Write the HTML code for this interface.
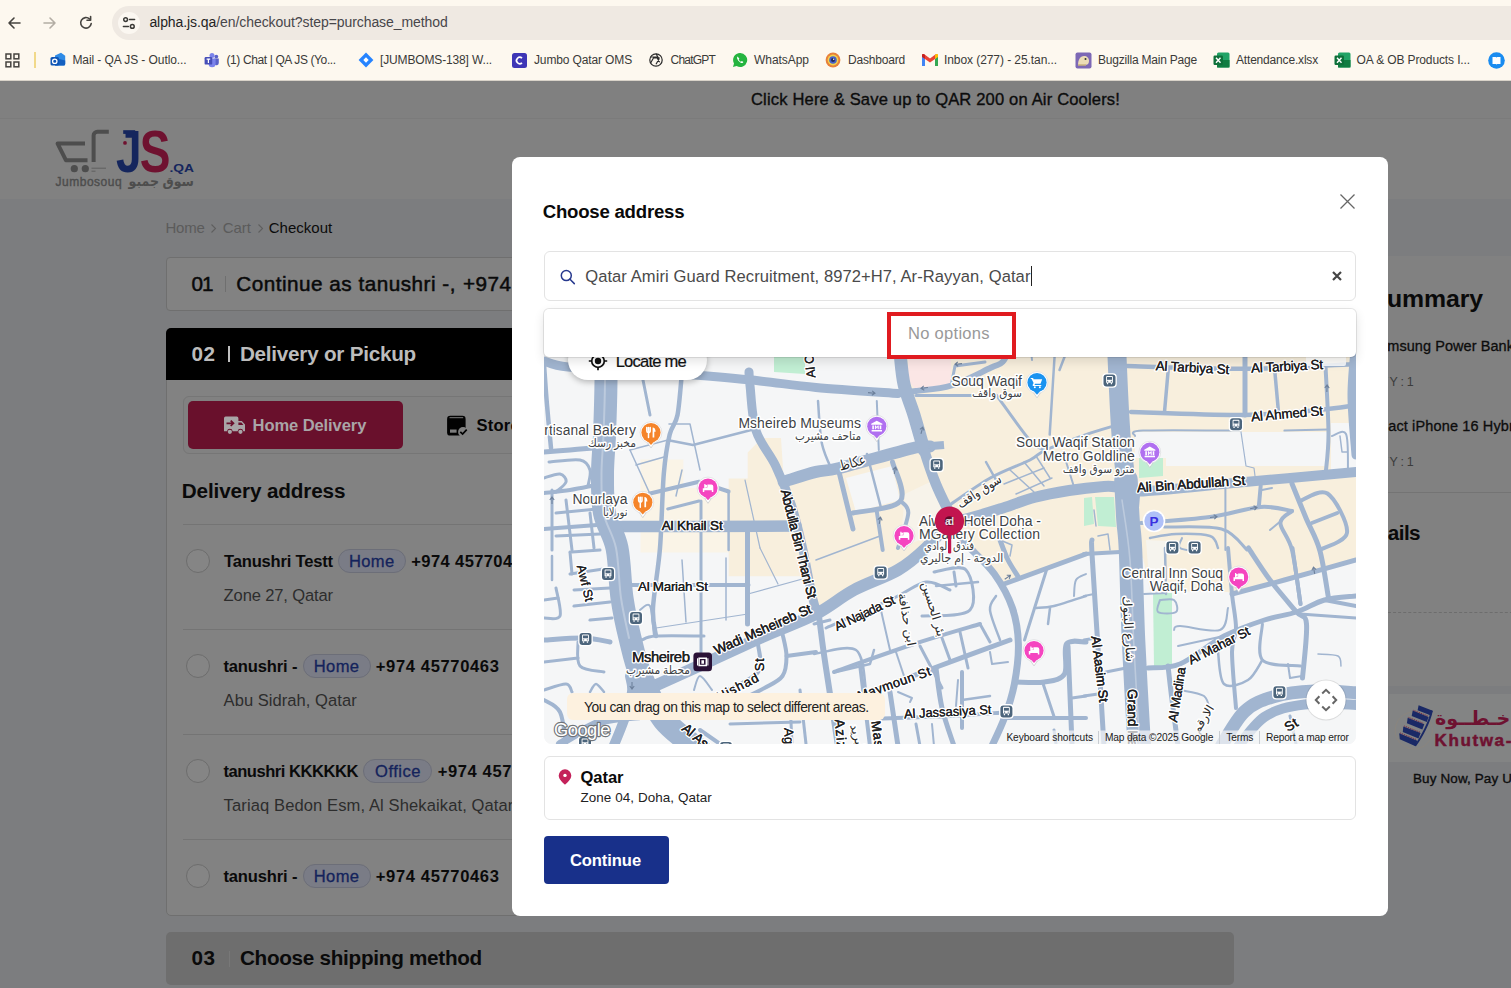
<!DOCTYPE html>
<html lang="en">
<head>
<meta charset="utf-8">
<title>Checkout - Choose address</title>
<style>
*{box-sizing:border-box;margin:0;padding:0}
html,body{width:1511px;height:988px;overflow:hidden;background:#7c7d7f;font-family:"Liberation Sans","DejaVu Sans",sans-serif;}
.abs{position:absolute}
.tx{position:absolute;white-space:nowrap;display:block}
#chrome{position:absolute;left:0;top:0;width:1511px;height:81px;background:#fdf8ef;border-bottom:1px solid #d9d3c9;z-index:20;overflow:hidden}
#omni{position:absolute;left:112px;top:6px;width:1420px;height:34px;border-radius:17px;background:#efe9e2}
#page{position:absolute;left:0;top:81px;width:1511px;height:907px;overflow:hidden;}
#page .in{position:absolute;left:0;top:-81px;width:1511px;height:988px}
.card{position:absolute;background:#828282;border:1px solid #6f6f6f;border-radius:4px}
.hr{position:absolute;height:1px;background:#747474;left:183px;width:1036px}
.radio{position:absolute;left:186px;width:24px;height:24px;border-radius:50%;border:1px solid #6d6d6d;background:#858585}
.badge{position:absolute;height:24px;border-radius:12px;border:1px solid #6c6e78;background:#7a7c86}
#modal{position:absolute;left:512px;top:157px;width:876px;height:759px;background:#fff;border-radius:8px;z-index:10;overflow:hidden}
#modal .in{position:absolute;left:-512px;top:-157px;width:1511px;height:988px}
</style>
</head>
<body>
<!-- ===================== BROWSER CHROME ===================== -->
<div id="chrome">
  <div id="omni"></div>
  <!-- back -->
  <svg class="abs" style="left:6px;top:15px" width="16" height="16" viewBox="0 0 16 16"><path d="M14 8H3M8 3L3 8l5 5" fill="none" stroke="#45433f" stroke-width="1.6" stroke-linecap="round" stroke-linejoin="round"/></svg>
  <!-- forward -->
  <svg class="abs" style="left:42px;top:15px" width="16" height="16" viewBox="0 0 16 16"><path d="M2 8h11M8 3l5 5-5 5" fill="none" stroke="#b3ada4" stroke-width="1.6" stroke-linecap="round" stroke-linejoin="round"/></svg>
  <!-- reload -->
  <svg class="abs" style="left:78px;top:15px" width="16" height="16" viewBox="0 0 16 16"><path d="M13.2 8.6A5.3 5.3 0 1 1 11.6 4" fill="none" stroke="#45433f" stroke-width="1.6" stroke-linecap="round"/><path d="M12.6 1.6v3.6H9" fill="none" stroke="#45433f" stroke-width="1.6" stroke-linecap="round" stroke-linejoin="round"/></svg>
  <!-- site info -->
  <div class="abs" style="left:118px;top:12px;width:22px;height:22px;border-radius:11px;background:#fbf7f1"></div>
  <svg class="abs" style="left:121px;top:15px" width="16" height="16" viewBox="0 0 16 16"><g fill="none" stroke="#3b3a37" stroke-width="1.5" stroke-linecap="round"><path d="M8.5 4.6H13.6M2.4 11.4H7.4"/><circle cx="4.6" cy="4.6" r="1.9"/><circle cx="11.3" cy="11.4" r="1.9"/></g></svg>
  <!-- apps grid -->
  <svg class="abs" style="left:5px;top:53px" width="15" height="15" viewBox="0 0 15 15"><g fill="none" stroke="#45433f" stroke-width="1.5"><rect x="1" y="1" width="4.8" height="4.8"/><rect x="9" y="1" width="4.8" height="4.8"/><rect x="1" y="9" width="4.8" height="4.8"/><rect x="9" y="9" width="4.8" height="4.8"/></g></svg>
  <div class="abs" style="left:34px;top:52px;width:1.5px;height:16px;background:#f1d98a"></div>
  <!-- bookmark favicons -->
  <svg class="abs" style="left:50px;top:52px" width="16" height="16" viewBox="0 0 16 16"><path d="M5 3.5L11 .8l4.2 3V12a1.6 1.6 0 0 1-1.6 1.6H5z" fill="#2f8be6"/><path d="M5 6l10.2 2.5V12a1.6 1.6 0 0 1-1.6 1.6H5z" fill="#1460c0"/><rect x=".5" y="5" width="8.5" height="8.5" rx="1.6" fill="#0f55b5"/><circle cx="4.75" cy="9.25" r="2.2" fill="none" stroke="#fff" stroke-width="1.3"/></svg>
  <svg class="abs" style="left:204px;top:52px" width="16" height="16" viewBox="0 0 16 16"><circle cx="12.3" cy="4.6" r="1.9" fill="#5a62c8"/><circle cx="8" cy="3.4" r="2.5" fill="#7b83eb"/><path d="M10.5 6.5h4.3v4.6a2.3 2.3 0 0 1-4.3 1z" fill="#5a62c8"/><path d="M4.6 6.5h7v5.2a3.5 3.5 0 0 1-7 0z" fill="#7b83eb"/><rect x=".6" y="5" width="7.6" height="7.6" rx="1.2" fill="#464eb8"/><path d="M2.6 7.2h3.6M4.4 7.2v3.9" stroke="#fff" stroke-width="1.2"/></svg>
  <svg class="abs" style="left:358px;top:52px" width="16" height="16" viewBox="0 0 16 16"><path d="M8 .6L15.4 8 8 15.4.6 8z" fill="#2684ff"/><path d="M8 5.3L10.7 8 8 10.7 5.3 8z" fill="#fff"/></svg>
  <svg class="abs" style="left:512px;top:53px" width="15" height="15" viewBox="0 0 15 15"><rect width="15" height="15" rx="2.5" fill="#3e36b6"/><path d="M10 5.2a3.2 3.2 0 1 0 0 4.6" fill="none" stroke="#fff" stroke-width="1.7"/></svg>
  <svg class="abs" style="left:648px;top:52px" width="16" height="16" viewBox="0 0 16 16"><g fill="none" stroke="#2b2b2b" stroke-width="1.2"><circle cx="8" cy="8" r="6.2"/><path d="M8 1.8l3 5.2-3 5.2M2.6 5l6 0 3 5.2M2.6 11l3-5.2 6 0"/></g></svg>
  <svg class="abs" style="left:732px;top:52px" width="16" height="16" viewBox="0 0 16 16"><path d="M8 1a7 7 0 0 0-6 10.5L1 15l3.6-1A7 7 0 1 0 8 1z" fill="#25b43f"/><path d="M5.6 4.6c-.6.6-.8 1.600 0 3 .9 1.600 2.300 2.900 3.800 3.400 1 .3 1.700-.3 2-.9l-1.600-1-.8.7c-.9-.4-1.900-1.400-2.300-2.300l.7-.8z" fill="#fff"/></svg>
  <svg class="abs" style="left:825px;top:52px" width="16" height="16" viewBox="0 0 16 16"><circle cx="8" cy="8" r="7.4" fill="#e8803a"/><circle cx="8" cy="8" r="5.4" fill="#f5d24a"/><circle cx="8" cy="8" r="3.8" fill="#4a63c9"/><circle cx="8" cy="8" r="2" fill="#232a5c"/><circle cx="8.700" cy="7.3" r=".7" fill="#fff"/></svg>
  <svg class="abs" style="left:922px;top:54px" width="16" height="12" viewBox="0 0 16 12"><path d="M0 1.200V12h3V5z" fill="#4285f4"/><path d="M16 1.200V12h-3V5z" fill="#34a853"/><path d="M0 1.200L3 5l5 3.600L13 5l3-3.800L13.700.2 8 4.600 2.300.2z" fill="#ea4335"/><path d="M13 5V1l1.300-.9A1.100 1.100 0 0 1 16 1.200V3z" fill="#fbbc04"/><path d="M3 5V1L1.700.1A1.100 1.100 0 0 0 0 1.200V3z" fill="#c5221f"/></svg>
  <svg class="abs" style="left:1075px;top:52px" width="17" height="17" viewBox="0 0 17 17"><rect x=".5" y=".5" width="16" height="16" rx="2" fill="#7d68b5"/><path d="M3 13c0-5 2-9 6-9 3 0 5 2 5 5s-2 4-4 4z" fill="#ecdcb6"/><circle cx="10.500" cy="7" r="1" fill="#333"/><path d="M3 13h8" stroke="#c9b37c" stroke-width="1.500"/></svg>
  <svg class="abs" style="left:1213px;top:52px" width="17" height="16" viewBox="0 0 17 16"><rect x="4" y=".5" width="12.500" height="15" rx="1.500" fill="#21a366"/><rect x="4" y="8" width="12.500" height="7.500" fill="#107c41"/><rect x=".5" y="3.500" width="9.500" height="9.500" rx="1.200" fill="#0e703a"/><path d="M3 5.800l4.500 5M7.500 5.800l-4.500 5" stroke="#fff" stroke-width="1.400"/></svg>
  <svg class="abs" style="left:1334px;top:52px" width="17" height="16" viewBox="0 0 17 16"><rect x="4" y=".5" width="12.500" height="15" rx="1.500" fill="#21a366"/><rect x="4" y="8" width="12.500" height="7.500" fill="#107c41"/><rect x=".5" y="3.500" width="9.500" height="9.500" rx="1.200" fill="#0e703a"/><path d="M3 5.800l4.500 5M7.500 5.800l-4.500 5" stroke="#fff" stroke-width="1.400"/></svg>
  <svg class="abs" style="left:1488px;top:52px" width="17" height="17" viewBox="0 0 17 17"><circle cx="8.500" cy="8.500" r="8.300" fill="#1a8cf0"/><path d="M4.500 5h3.200a1 1 0 0 1 .8.400 1 1 0 0 1 .8-.4h3.200v7H9.300l-.8.600-.8-.6H4.500z" fill="#fff"/></svg>
<span id="t0" class="tx" style="left:149.4px;top:12.3px;line-height:20px;font-size:14px;font-weight:400;color:#47464a;letter-spacing:-0.075px;"><span style="color:#1f1f1f">alpha.js.qa</span>/en/checkout?step=purchase_method</span>
<span id="t1" class="tx" style="left:72.4px;top:51.8px;line-height:17px;font-size:12px;font-weight:400;color:#3a3a38;letter-spacing:-0.080px;">Mail - QA JS - Outlo...</span>
<span id="t2" class="tx" style="left:226.4px;top:51.8px;line-height:17px;font-size:12px;font-weight:400;color:#3a3a38;letter-spacing:-0.377px;">(1) Chat | QA JS (Yo...</span>
<span id="t3" class="tx" style="left:380.0px;top:51.8px;line-height:17px;font-size:12px;font-weight:400;color:#3a3a38;letter-spacing:-0.149px;">[JUMBOMS-138] W...</span>
<span id="t4" class="tx" style="left:534.0px;top:51.8px;line-height:17px;font-size:12px;font-weight:400;color:#3a3a38;letter-spacing:-0.135px;">Jumbo Qatar OMS</span>
<span id="t5" class="tx" style="left:670.5px;top:51.8px;line-height:17px;font-size:12px;font-weight:400;color:#3a3a38;letter-spacing:-0.788px;">ChatGPT</span>
<span id="t6" class="tx" style="left:754.0px;top:51.8px;line-height:17px;font-size:12px;font-weight:400;color:#3a3a38;letter-spacing:-0.045px;">WhatsApp</span>
<span id="t7" class="tx" style="left:848.0px;top:51.8px;line-height:17px;font-size:12px;font-weight:400;color:#3a3a38;letter-spacing:-0.191px;">Dashboard</span>
<span id="t8" class="tx" style="left:944.0px;top:51.8px;line-height:17px;font-size:12px;font-weight:400;color:#3a3a38;letter-spacing:-0.075px;">Inbox (277) - 25.tan...</span>
<span id="t9" class="tx" style="left:1098.0px;top:51.8px;line-height:17px;font-size:12px;font-weight:400;color:#3a3a38;letter-spacing:-0.207px;">Bugzilla Main Page</span>
<span id="t10" class="tx" style="left:1236.0px;top:51.8px;line-height:17px;font-size:12px;font-weight:400;color:#3a3a38;letter-spacing:-0.181px;">Attendance.xlsx</span>
<span id="t11" class="tx" style="left:1356.5px;top:51.8px;line-height:17px;font-size:12px;font-weight:400;color:#3a3a38;letter-spacing:-0.121px;">OA &amp; OB Products I...</span>
</div>

<!-- ===================== DIMMED PAGE ===================== -->
<div id="page"><div class="in">
  <div class="abs" style="left:0;top:81px;width:1511px;height:37px;background:#808080"></div>
  <div class="abs" style="left:0;top:118px;width:1511px;height:81px;background:#818181;border-top:1px solid #7b7b7b"></div>
  <svg class="abs" style="left:50px;top:122px" width="150" height="72" viewBox="50 122 150 72">
    <g fill="none" stroke="#4d4d4d" stroke-width="4" stroke-linejoin="round">
      <path d="M85 143.600H57.600L66 160.300H87.500"/>
      <path d="M93.600 162V135.500a3.800 3.800 0 0 1 3.800-3.800H108.800"/>
    </g>
    <circle cx="74.300" cy="168.700" r="3.600" fill="#4d4d4d"/><circle cx="85.300" cy="168.700" r="3.600" fill="#4d4d4d"/>
    <path d="M91.500 168.200h14.500M91.500 171.200h4" stroke="#5a5a5a" stroke-width=".9"/>
    <circle cx="125" cy="142.900" r="1.900" fill="#6f1230"/>
    <rect x="123.200" y="130.200" width="12" height="3.700" fill="#15265d"/>
    <text x="0" y="0" transform="translate(116 172.300) scale(.78 1)" font-size="59" font-weight="700" fill="#15265d">J</text>
    <text x="0" y="0" transform="translate(139.800 172.300) scale(.78 1)" font-size="59" font-weight="700" fill="#6f1230">S</text>
    <text x="169.500" y="172.300" font-size="11.800" font-weight="700" fill="#15265d" textLength="24.500" lengthAdjust="spacingAndGlyphs">.QA</text>
    <text x="55.600" y="186.300" font-size="12" font-weight="400" fill="#4d4d4d" stroke="#4d4d4d" stroke-width=".4" textLength="66" lengthAdjust="spacing">Jumbosouq</text>
    <text x="194" y="186" font-size="13.500" font-weight="700" fill="#4d4d4d" text-anchor="end" textLength="65.500" lengthAdjust="spacingAndGlyphs">سوق جمبو</text>
  </svg>
  <!-- breadcrumb chevrons -->
  <svg class="abs" style="left:210px;top:223px" width="7" height="11" viewBox="0 0 7 11"><path d="M1.500 1.500l4 4-4 4" fill="none" stroke="#5f5f5f" stroke-width="1.100"/></svg>
  <svg class="abs" style="left:257px;top:223px" width="7" height="11" viewBox="0 0 7 11"><path d="M1.500 1.500l4 4-4 4" fill="none" stroke="#5f5f5f" stroke-width="1.100"/></svg>
  <!-- step 01 -->
  <div class="card" style="left:166px;top:257px;width:1068px;height:54px"></div>
  <div class="abs" style="left:224.500px;top:276px;width:1.500px;height:16px;background:#6f6f6f"></div>
  <!-- step 02 -->
  <div class="card" style="left:166px;top:328px;width:1068px;height:588px;border-radius:5px"></div>
  <div class="abs" style="left:166px;top:328px;width:1068px;height:52px;background:#000;border-radius:5px 5px 0 0"></div>
  <div class="abs" style="left:228px;top:346px;width:1.600px;height:16px;background:#c0c0c0"></div>
  <div class="abs" style="left:183px;top:396px;width:1036px;height:58px;border:1px solid #767676;border-radius:6px;background:#818181"></div>
  <div class="abs" style="left:188px;top:401px;width:215px;height:48px;border-radius:5px;background:#69102c"></div>
  <!-- truck -->
  <svg class="abs" style="left:222px;top:415px" width="26" height="22" viewBox="0 0 26 22"><g fill="#a9a5a7"><path d="M2 3.200a1.600 1.600 0 0 1 1.600-1.600H14.800a1.600 1.600 0 0 1 1.600 1.600V6h3.400l3.200 3.600v6.600h-1.700a2.900 2.900 0 0 0-5.700 0H10.700a2.900 2.900 0 0 0-5.700 0H2z"/><circle cx="7.850" cy="16.800" r="2.100"/><circle cx="18.450" cy="16.800" r="2.100"/></g><path d="M4.500 8.300h6.300M8.700 5.600l2.800 2.700-2.800 2.700" fill="none" stroke="#69102c" stroke-width="1.700"/><path d="M16.400 7.600h3l2 2.400h-5z" fill="#69102c"/></svg>
  <!-- store pickup -->
  <svg class="abs" style="left:446px;top:414px" width="24" height="24" viewBox="0 0 24 24"><rect x="1.100" y="1.800" width="18.500" height="19.800" rx="3.200" fill="#020202"/><path d="M3.500 3.700h13.700" stroke="#8a8a8a" stroke-width=".9"/><rect x="4" y="15.500" width="6.600" height="3.200" fill="#7d7d7d"/><circle cx="17" cy="18" r="4.900" fill="#808080"/><path d="M14.300 17.800l2.300 2.300 4.100-4.500" fill="none" stroke="#020202" stroke-width="1.700"/></svg>
  <div class="hr" style="top:524px"></div><div class="hr" style="top:629px"></div><div class="hr" style="top:734px"></div><div class="hr" style="top:839px"></div>
  <div class="radio" style="top:549px"></div><div class="radio" style="top:654px"></div><div class="radio" style="top:759px"></div><div class="radio" style="top:864px"></div>
  <div class="badge" style="left:338px;top:549px;width:68px"></div>
  <div class="badge" style="left:303px;top:654px;width:68px"></div>
  <div class="badge" style="left:363px;top:759px;width:69px"></div>
  <div class="badge" style="left:303px;top:864px;width:68px"></div>
  <!-- step 03 -->
  <div class="abs" style="left:166px;top:932px;width:1068px;height:53px;background:#6e6e6e;border-radius:5px"></div>
  <div class="abs" style="left:228.500px;top:951px;width:1.500px;height:16px;background:#787878"></div>
  <!-- right column: order summary -->
  <div class="abs" style="left:1380px;top:256px;width:140px;height:430px;background:#818181"></div>
  <div class="abs" style="left:1388px;top:492px;width:130px;height:1px;background:#747474"></div>
  <div class="abs" style="left:1388px;top:612px;width:130px;height:0;border-top:1px dashed #6d6d6d"></div>
  <div class="abs" style="left:1389px;top:694px;width:140px;height:68px;background:#838484"></div>
  <svg class="abs" style="left:1390px;top:700px" width="50" height="60" viewBox="1390 700 50 60">
    <circle cx="1413.800" cy="730.500" r="18.600" fill="none" stroke="#8b857c" stroke-width=".8"/>
    <g fill="#1a2966">
      <path d="M1418.600 705.300L1432.700 710.800 1431 715.600 1417.600 710.200z"/>
      <path d="M1412.700 710.600L1428.600 716.900 1426.800 722 1411.700 715.900z"/>
      <path d="M1407.700 717.700L1424.300 724.300 1422.300 729.500 1406.900 723.200z"/>
      <path d="M1403.300 726.400L1420.600 733.100 1418.500 738.400 1402.800 731.900z"/>
      <path d="M1399.200 733.300L1417.400 740.700 1415.600 746.200 1399.800 739.300z"/>
      <path d="M1431 710.200L1432.800 710.900C1430.200 722.400 1423.600 735.800 1416 746.300L1414.400 745.600C1421.800 735 1428.400 721.700 1431 710.200z"/>
    </g>
    <g stroke="#7b1c3a" stroke-width=".9" stroke-dasharray="1.100 .9" fill="none"><path d="M1413.500 710.300l14.500 5.700M1408.500 717.400l15 6M1404.200 726l15.800 6.200M1400.200 733l16.500 6.700"/></g>
  </svg>
<span id="t12" class="tx" style="left:751.0px;top:88.9px;line-height:22px;font-size:16.56px;font-weight:400;color:#0c0c0c;letter-spacing:0.162px;-webkit-text-stroke:0.35px #0c0c0c;">Click Here &amp; Save up to QAR 200 on Air Coolers!</span>
<span id="t13" class="tx" style="left:165.4px;top:218.1px;line-height:20px;font-size:15.0075px;font-weight:400;color:#5b5b5b;letter-spacing:-0.168px;">Home</span>
<span id="t14" class="tx" style="left:222.7px;top:218.1px;line-height:20px;font-size:15.0075px;font-weight:400;color:#5b5b5b;letter-spacing:-0.050px;">Cart</span>
<span id="t15" class="tx" style="left:268.7px;top:218.1px;line-height:20px;font-size:15.0075px;font-weight:400;color:#0b0b0b;letter-spacing:0.033px;">Checkout</span>
<span id="t16" class="tx" style="left:191.4px;top:269.7px;line-height:28px;font-size:20.7px;font-weight:400;color:#0a0a0a;letter-spacing:-0.808px;-webkit-text-stroke:0.5px #0a0a0a;">01</span>
<span id="t17" class="tx" style="left:236.2px;top:269.7px;line-height:28px;font-size:20.7px;font-weight:400;color:#0a0a0a;letter-spacing:0.507px;-webkit-text-stroke:0.5px #0a0a0a;">Continue as tanushri -,</span>
<span id="t18" class="tx" style="left:463.0px;top:269.7px;line-height:28px;font-size:20.7px;font-weight:400;color:#0a0a0a;letter-spacing:0.473px;-webkit-text-stroke:0.5px #0a0a0a;">+974</span><span class="tx" style="left:511.5px;top:269.7px;line-height:28px;font-size:20.7px;font-weight:400;color:#0a0a0a;-webkit-text-stroke:0.5px #0a0a0a;">&nbsp;45770463</span>
<span id="t19" class="tx" style="left:191.4px;top:339.7px;line-height:28px;font-size:20.7px;font-weight:700;color:#bcbcbc;letter-spacing:0.692px;">02</span>
<span id="t20" class="tx" style="left:239.9px;top:339.7px;line-height:28px;font-size:20.7px;font-weight:700;color:#bcbcbc;letter-spacing:-0.246px;">Delivery or Pickup</span>
<span id="t21" class="tx" style="left:191.4px;top:944.4px;line-height:28px;font-size:20.7px;font-weight:700;color:#0a0a0a;letter-spacing:0.692px;">03</span>
<span id="t22" class="tx" style="left:239.9px;top:944.4px;line-height:28px;font-size:20.7px;font-weight:700;color:#0a0a0a;letter-spacing:-0.280px;">Choose shipping method</span>
<span id="t23" class="tx" style="left:252.6px;top:415.2px;line-height:22px;font-size:16.56px;font-weight:700;color:#a9a5a7;letter-spacing:-0.102px;">Home Delivery</span>
<span id="t24" class="tx" style="left:476.4px;top:415.2px;line-height:22px;font-size:16.56px;font-weight:700;color:#050505;letter-spacing:0.261px;">Store</span><span class="tx" style="left:520.0px;top:415.2px;line-height:22px;font-size:16.56px;font-weight:700;color:#050505;">&nbsp;Pickup</span>
<span id="t25" class="tx" style="left:181.8px;top:476.7px;line-height:28px;font-size:20.7px;font-weight:700;color:#0a0a0a;letter-spacing:-0.126px;">Delivery address</span>
<span id="t26" class="tx" style="left:224.1px;top:550.9px;line-height:22px;font-size:16.56px;font-weight:700;color:#0a0a0a;letter-spacing:-0.203px;">Tanushri Testt</span>
<span id="t27" class="tx" style="left:348.9px;top:550.9px;line-height:22px;font-size:16.56px;font-weight:400;color:#14235c;letter-spacing:0.350px;-webkit-text-stroke:0.3px #14235c;">Home</span>
<span id="t28" class="tx" style="left:411.3px;top:550.9px;line-height:22px;font-size:16.56px;font-weight:700;color:#0a0a0a;letter-spacing:0.377px;">+974 457704</span><span class="tx" style="left:512.5px;top:550.9px;line-height:22px;font-size:16.56px;font-weight:700;color:#0a0a0a;">63</span>
<span id="t29" class="tx" style="left:223.6px;top:585.3px;line-height:22px;font-size:16.56px;font-weight:400;color:#2d2d2d;letter-spacing:-0.135px;">Zone 27, Qatar</span>
<span id="t30" class="tx" style="left:223.4px;top:656.1px;line-height:22px;font-size:16.56px;font-weight:700;color:#0a0a0a;letter-spacing:-0.149px;">tanushri -</span>
<span id="t31" class="tx" style="left:313.7px;top:656.1px;line-height:22px;font-size:16.56px;font-weight:400;color:#14235c;letter-spacing:0.400px;-webkit-text-stroke:0.3px #14235c;">Home</span>
<span id="t32" class="tx" style="left:375.8px;top:656.1px;line-height:22px;font-size:16.56px;font-weight:700;color:#0a0a0a;letter-spacing:0.634px;">+974 45770463</span>
<span id="t33" class="tx" style="left:223.6px;top:690.3px;line-height:22px;font-size:16.56px;font-weight:400;color:#2d2d2d;letter-spacing:0.038px;">Abu Sidrah, Qatar</span>
<span id="t34" class="tx" style="left:223.4px;top:760.9px;line-height:22px;font-size:16.56px;font-weight:700;color:#0a0a0a;letter-spacing:-0.465px;">tanushri KKKKKK</span>
<span id="t35" class="tx" style="left:375.0px;top:760.9px;line-height:22px;font-size:16.56px;font-weight:400;color:#14235c;letter-spacing:0.513px;-webkit-text-stroke:0.3px #14235c;">Office</span>
<span id="t36" class="tx" style="left:437.7px;top:760.9px;line-height:22px;font-size:16.56px;font-weight:700;color:#0a0a0a;letter-spacing:0.607px;">+974 457</span><span class="tx" style="left:512.0px;top:760.9px;line-height:22px;font-size:16.56px;font-weight:700;color:#0a0a0a;">70463</span>
<span id="t37" class="tx" style="left:223.6px;top:795.1px;line-height:22px;font-size:16.56px;font-weight:400;color:#2d2d2d;letter-spacing:0.104px;">Tariaq Bedon Esm, Al Shekaikat, Qatar</span>
<span id="t38" class="tx" style="left:223.4px;top:865.9px;line-height:22px;font-size:16.56px;font-weight:700;color:#0a0a0a;letter-spacing:-0.149px;">tanushri -</span>
<span id="t39" class="tx" style="left:313.7px;top:865.9px;line-height:22px;font-size:16.56px;font-weight:400;color:#14235c;letter-spacing:0.400px;-webkit-text-stroke:0.3px #14235c;">Home</span>
<span id="t40" class="tx" style="left:375.8px;top:865.9px;line-height:22px;font-size:16.56px;font-weight:700;color:#0a0a0a;letter-spacing:0.634px;">+974 45770463</span>
<span class="tx" style="right:125.3px;top:281.9px;line-height:34px;font-size:24.84px;font-weight:700;color:#0a0a0a;">Order S</span><span id="t41" class="tx" style="left:1387.0px;top:281.9px;line-height:34px;font-size:24.84px;font-weight:700;color:#0a0a0a;letter-spacing:-0.108px;">ummary</span>
<span class="tx" style="right:125.0px;top:335.9px;line-height:20px;font-size:14.49px;font-weight:400;color:#0d0d0d;-webkit-text-stroke:0.3px #0d0d0d;">Sa</span><span id="t42" class="tx" style="left:1387.3px;top:335.9px;line-height:20px;font-size:14.49px;font-weight:400;color:#0d0d0d;letter-spacing:0.070px;-webkit-text-stroke:0.3px #0d0d0d;">msung Power Bank</span>
<span class="tx" style="right:122.9px;top:374.4px;line-height:17px;font-size:12.42px;font-weight:400;color:#3c3c3c;">QT</span><span id="t43" class="tx" style="left:1389.4px;top:374.4px;line-height:17px;font-size:12.42px;font-weight:400;color:#3c3c3c;letter-spacing:-0.239px;">Y : 1</span>
<span class="tx" style="right:124.1px;top:415.9px;line-height:20px;font-size:14.49px;font-weight:400;color:#0d0d0d;-webkit-text-stroke:0.3px #0d0d0d;">Comp</span><span id="t44" class="tx" style="left:1388.2px;top:415.9px;line-height:20px;font-size:14.49px;font-weight:400;color:#0d0d0d;letter-spacing:0.144px;-webkit-text-stroke:0.3px #0d0d0d;">act iPhone 16 Hybr</span>
<span class="tx" style="right:122.9px;top:454.4px;line-height:17px;font-size:12.42px;font-weight:400;color:#3c3c3c;">QT</span><span id="t45" class="tx" style="left:1389.4px;top:454.4px;line-height:17px;font-size:12.42px;font-weight:400;color:#3c3c3c;letter-spacing:-0.239px;">Y : 1</span>
<span class="tx" style="right:124.5px;top:519.1px;line-height:28px;font-size:20.7px;font-weight:700;color:#0a0a0a;">Price Det</span><span id="t46" class="tx" style="left:1387.8px;top:519.1px;line-height:28px;font-size:20.7px;font-weight:700;color:#0a0a0a;letter-spacing:-0.579px;">ails</span>
<span id="t47" class="tx" style="left:1413.0px;top:769.5px;line-height:18px;font-size:13.455px;font-weight:400;color:#0d0d0d;letter-spacing:0.139px;-webkit-text-stroke:0.35px #0d0d0d;">Buy Now, Pay U</span>
<span id="t48" class="tx" style="left:1434.5px;top:728.7px;line-height:23px;font-size:17.0775px;font-weight:700;color:#6e1231;letter-spacing:1.597px;-webkit-text-stroke:0.5px #6e1231;">Khutwa-</span>
<span id="t49" class="tx" style="left:1435.0px;top:706.4px;line-height:26px;font-size:19.1475px;font-weight:700;color:#6e1231;direction:rtl;">خـطــوة</span>
</div></div>

<!-- ===================== MODAL ===================== -->
<div id="modal"><div class="in">
  <!-- close -->
  <svg class="abs" style="left:1339px;top:193px" width="17" height="17" viewBox="0 0 17 17"><path d="M1.500 1.500l14 14M15.500 1.500l-14 14" stroke="#666" stroke-width="1.300" fill="none"/></svg>
  <!-- search input -->
  <div class="abs" style="left:544px;top:251px;width:812px;height:50px;border:1px solid #e3e3e3;border-radius:6px;background:#fff"></div>
  <svg class="abs" style="left:559px;top:268px" width="18" height="18" viewBox="0 0 18 18"><circle cx="7.300" cy="7.600" r="5" fill="none" stroke="#27398e" stroke-width="1.500"/><path d="M11 11.300l4.300 4.300" stroke="#27398e" stroke-width="1.500" stroke-linecap="round"/></svg>
  <div class="abs" style="left:1031px;top:266px;width:1px;height:20px;background:#222"></div>
  <svg class="abs" style="left:1331px;top:270px" width="12" height="12" viewBox="0 0 12 12"><path d="M2 2l8 8M10 2l-8 8" stroke="#444" stroke-width="2.200" fill="none"/></svg>
  <!-- map -->
  <div class="abs" style="left:544px;top:320px;width:812px;height:424px;border-radius:0 0 8px 8px;overflow:hidden;background:#f5f6f7">
<svg width="812" height="424" viewBox="544 320 812 424" style="position:absolute;left:0;top:0;font-family:'Liberation Sans','DejaVu Sans',sans-serif">
<rect x="544" y="320" width="812" height="424" fill="#f5f6f7"/>
<polygon points="908,320 1356,320 1356,560 1284,580 1232,594 1228,592 1150,591 1143,558 1120,553 1086,554 1004,584 990,566 968,546 949,521 936,484 924,450 914,415 904,385" fill="#f8efdd"/>
<polygon points="949,521 926,548 898,570 854,590 816,612 806,560 792,505 784,483 816,473 840,469 912,449 936,447" fill="#f8efdd"/>
<polygon points="640.5,459.6 683.4,459.6 683.4,488 728.7,488 728.7,552.5 640.5,552.5" fill="#faf4e7"/>
<polygon points="728.7,478.6 747.7,478.6 747.7,452.4 762,438 781,438 783.5,476 790.6,490.5 797.8,533.4 809.7,576.3 728.7,576.3" fill="#f8efdd"/>
<polygon points="1135,432 1327,432 1327,466 1166,466 1166,458 1135,458" fill="#f5f6f7"/>
<polygon points="1331,423 1356,423 1356,470 1331,474" fill="#f5f6f7"/>
<polygon points="846,478 892,466 900,500 856,512" fill="#f5f6f7"/>
<polygon points="905,494 930,482 944,512 920,540 900,548" fill="#f7f3ea"/>
<polygon points="1146,540 1166,541 1166,592 1150,592" fill="#f6f4ee"/>
<polygon points="909,320 951,320 951,384 916,390 908,380" fill="#fbe6e5"/>
<polygon points="774,340 805,340 805,374 774,372" fill="#c1eed3"/>
<polygon points="1139,458 1163,458 1163,476 1139,478" fill="#c1eed3"/>
<polygon points="1084,498 1092,497 1094,524 1084,526" fill="#c1eed3"/>
<polygon points="1095,497 1114,497 1116,527 1098,526" fill="#c1eed3"/>
<polygon points="1153,593 1172,593 1172,666 1154,666" fill="#c1eed3"/>
<path d="M544 452 C548.3 451.7 561.8 450.7 570 450 C578.2 449.3 589.2 448.3 593 448" fill="none" stroke="#a1b5d0" stroke-width="5" stroke-linecap="round" stroke-linejoin="round"/>
<path d="M544 493 C548.3 492.5 562.2 491.2 570 490 C577.8 488.8 587.5 486.7 591 486" fill="none" stroke="#a1b5d0" stroke-width="4" stroke-linecap="round" stroke-linejoin="round"/>
<path d="M556 513 L597 509" fill="none" stroke="#a1b5d0" stroke-width="3" stroke-linecap="round" stroke-linejoin="round"/>
<path d="M552 490 L552 550" fill="none" stroke="#a1b5d0" stroke-width="3" stroke-linecap="round" stroke-linejoin="round"/>
<path d="M566 500 L572 550" fill="none" stroke="#a1b5d0" stroke-width="3" stroke-linecap="round" stroke-linejoin="round"/>
<path d="M544 364 C544.5 370.8 545.8 391.0 547 405 C548.2 419.0 550.3 440.8 551 448" fill="none" stroke="#a1b5d0" stroke-width="4.5" stroke-linecap="round" stroke-linejoin="round"/>
<path d="M549 462 C554.2 461.7 573.2 458.7 580 460 C586.8 461.3 588.7 465.7 590 470 C591.3 474.3 588.3 483.3 588 486" fill="none" stroke="#a1b5d0" stroke-width="3" stroke-linecap="round" stroke-linejoin="round"/>
<path d="M544 478 C546.7 477.3 556.3 473.3 560 474 C563.7 474.7 566.7 479.0 566 482 C565.3 485.0 557.7 490.3 556 492" fill="none" stroke="#a1b5d0" stroke-width="3" stroke-linecap="round" stroke-linejoin="round"/>
<path d="M544 529 L597 525" fill="none" stroke="#a1b5d0" stroke-width="4" stroke-linecap="round" stroke-linejoin="round"/>
<path d="M556 536 L600 534" fill="none" stroke="#a1b5d0" stroke-width="3" stroke-linecap="round" stroke-linejoin="round"/>
<path d="M590 513 L594 548" fill="none" stroke="#a1b5d0" stroke-width="3" stroke-linecap="round" stroke-linejoin="round"/>
<path d="M544 640 C550.7 639.7 573.0 637.7 584 638 C595.0 638.3 605.7 641.3 610 642" fill="none" stroke="#a1b5d0" stroke-width="5" stroke-linecap="round" stroke-linejoin="round"/>
<path d="M570 574 L610 568" fill="none" stroke="#a1b5d0" stroke-width="3" stroke-linecap="round" stroke-linejoin="round"/>
<path d="M574 590 L610 588" fill="none" stroke="#a1b5d0" stroke-width="3" stroke-linecap="round" stroke-linejoin="round"/>
<path d="M574 606 L610 602" fill="none" stroke="#a1b5d0" stroke-width="3" stroke-linecap="round" stroke-linejoin="round"/>
<path d="M590 620 L612 618" fill="none" stroke="#a1b5d0" stroke-width="3" stroke-linecap="round" stroke-linejoin="round"/>
<path d="M570 552 L572 574" fill="none" stroke="#a1b5d0" stroke-width="3" stroke-linecap="round" stroke-linejoin="round"/>
<path d="M572 552 L600 550" fill="none" stroke="#a1b5d0" stroke-width="3" stroke-linecap="round" stroke-linejoin="round"/>
<path d="M544 618 C546.7 617.7 558.0 621.0 560 616 C562.0 611.0 556.7 592.7 556 588" fill="none" stroke="#a1b5d0" stroke-width="3" stroke-linecap="round" stroke-linejoin="round"/>
<path d="M544 600 L558 598" fill="none" stroke="#a1b5d0" stroke-width="3" stroke-linecap="round" stroke-linejoin="round"/>
<path d="M544 662 L578 658" fill="none" stroke="#a1b5d0" stroke-width="3" stroke-linecap="round" stroke-linejoin="round"/>
<path d="M578 642 C578.3 646.0 575.7 661.0 580 666 C584.3 671.0 600.0 671.0 604 672" fill="none" stroke="#a1b5d0" stroke-width="3" stroke-linecap="round" stroke-linejoin="round"/>
<path d="M544 690 C547.7 689.0 561.3 683.7 566 684 C570.7 684.3 571.0 690.7 572 692" fill="none" stroke="#a1b5d0" stroke-width="3" stroke-linecap="round" stroke-linejoin="round"/>
<path d="M590 692 C591.0 690.7 593.7 684.0 596 684 C598.3 684.0 602.7 690.7 604 692" fill="none" stroke="#a1b5d0" stroke-width="2.5" stroke-linecap="round" stroke-linejoin="round"/>
<path d="M552 556 L552 580" fill="none" stroke="#a1b5d0" stroke-width="2.5" stroke-linecap="round" stroke-linejoin="round"/>
<path d="M544 700 C546.7 702.0 556.3 704.7 560 712 C563.7 719.3 565.0 738.7 566 744" fill="none" stroke="#a1b5d0" stroke-width="4" stroke-linecap="round" stroke-linejoin="round"/>
<path d="M682 372 C681.2 379.2 679.5 404.6 677.5 415 C675.5 425.4 672.0 424.8 669.7 434.6 C667.4 444.4 665.4 454.9 663.8 473.8 C662.2 492.7 661.8 525.6 660 548 C658.2 570.4 653.7 593.3 653 608 C652.3 622.7 655.5 631.3 656 636" fill="none" stroke="#a1b5d0" stroke-width="4.5" stroke-linecap="round" stroke-linejoin="round"/>
<path d="M642 375 L650 415" fill="none" stroke="#a1b5d0" stroke-width="3" stroke-linecap="round" stroke-linejoin="round"/>
<path d="M669.7 440.5 L693 445 L756 428.7" fill="none" stroke="#a1b5d0" stroke-width="2.5" stroke-linecap="round" stroke-linejoin="round"/>
<path d="M669 424 L690 424 L700 470" fill="none" stroke="#a1b5d0" stroke-width="1.5" stroke-linecap="round" stroke-linejoin="round"/>
<path d="M630 450 L668 440" fill="none" stroke="#a1b5d0" stroke-width="1.5" stroke-linecap="round" stroke-linejoin="round"/>
<path d="M630 450 L650 494" fill="none" stroke="#a1b5d0" stroke-width="1.5" stroke-linecap="round" stroke-linejoin="round"/>
<path d="M636 465 L664 457" fill="none" stroke="#a1b5d0" stroke-width="1.5" stroke-linecap="round" stroke-linejoin="round"/>
<path d="M650 493.5 L699 481.7 L728.6 491.5" fill="none" stroke="#a1b5d0" stroke-width="4" stroke-linecap="round" stroke-linejoin="round"/>
<path d="M667.7 509 L699 501" fill="none" stroke="#a1b5d0" stroke-width="3" stroke-linecap="round" stroke-linejoin="round"/>
<path d="M701 501 L701 652" fill="none" stroke="#a1b5d0" stroke-width="3" stroke-linecap="round" stroke-linejoin="round"/>
<path d="M728.6 491.5 L728.6 550" fill="none" stroke="#a1b5d0" stroke-width="2.5" stroke-linecap="round" stroke-linejoin="round"/>
<path d="M682 470 L676 496" fill="none" stroke="#a1b5d0" stroke-width="1.5" stroke-linecap="round" stroke-linejoin="round"/>
<path d="M745 480 L760 548" fill="none" stroke="#a1b5d0" stroke-width="1.2" stroke-linecap="round" stroke-linejoin="round"/>
<path d="M760 548 L778 584" fill="none" stroke="#a1b5d0" stroke-width="1.2" stroke-linecap="round" stroke-linejoin="round"/>
<path d="M747.5 530 L747.5 624" fill="none" stroke="#a1b5d0" stroke-width="5" stroke-linecap="round" stroke-linejoin="round"/>
<path d="M632 585 L748.5 585" fill="none" stroke="#a1b5d0" stroke-width="4" stroke-linecap="round" stroke-linejoin="round"/>
<path d="M642 640 C644.3 639.3 645.7 636.7 656 636 C666.3 635.3 696.0 636.0 704 636" fill="none" stroke="#a1b5d0" stroke-width="3" stroke-linecap="round" stroke-linejoin="round"/>
<path d="M726 558 L726 620" fill="none" stroke="#a1b5d0" stroke-width="1.5" stroke-linecap="round" stroke-linejoin="round"/>
<path d="M682 560 L686 622" fill="none" stroke="#a1b5d0" stroke-width="1.5" stroke-linecap="round" stroke-linejoin="round"/>
<path d="M656 628 L748 614" fill="none" stroke="#a1b5d0" stroke-width="1.2" stroke-linecap="round" stroke-linejoin="round"/>
<path d="M748 594 L806 578" fill="none" stroke="#a1b5d0" stroke-width="1.2" stroke-linecap="round" stroke-linejoin="round"/>
<path d="M640 610 C641.7 609.3 647.7 601.7 650 606 C652.3 610.3 653.3 631.0 654 636" fill="none" stroke="#a1b5d0" stroke-width="2" stroke-linecap="round" stroke-linejoin="round"/>
<path d="M724 692 C729.7 688.7 752.3 680.0 758 672 C763.7 664.0 758.0 648.7 758 644" fill="none" stroke="#a1b5d0" stroke-width="4" stroke-linecap="round" stroke-linejoin="round"/>
<path d="M782.5 634 C783.2 637.7 786.5 649.0 786.5 656 C786.5 663.0 786.2 670.7 782.5 676 C778.8 681.3 771.6 684.0 764.5 688 C757.4 692.0 744.1 698.0 740 700" fill="none" stroke="#a1b5d0" stroke-width="4" stroke-linecap="round" stroke-linejoin="round"/>
<path d="M786.5 656 L816 652" fill="none" stroke="#a1b5d0" stroke-width="4" stroke-linecap="round" stroke-linejoin="round"/>
<path d="M694 690 C695.0 687.7 697.0 676.0 700 676 C703.0 676.0 710.0 687.7 712 690" fill="none" stroke="#a1b5d0" stroke-width="2" stroke-linecap="round" stroke-linejoin="round"/>
<path d="M700 730 L720 744" fill="none" stroke="#a1b5d0" stroke-width="4" stroke-linecap="round" stroke-linejoin="round"/>
<path d="M730 724 L800 722" fill="none" stroke="#a1b5d0" stroke-width="3" stroke-linecap="round" stroke-linejoin="round"/>
<path d="M790 700 L792 744" fill="none" stroke="#a1b5d0" stroke-width="3" stroke-linecap="round" stroke-linejoin="round"/>
<path d="M800 690 L806 744" fill="none" stroke="#a1b5d0" stroke-width="3" stroke-linecap="round" stroke-linejoin="round"/>
<path d="M839.5 473.8 L853 529" fill="none" stroke="#a1b5d0" stroke-width="5" stroke-linecap="round" stroke-linejoin="round"/>
<path d="M892.5 462 C893.8 468.5 907.0 492.5 900.4 501 C893.8 509.5 860.9 511.0 853 513" fill="none" stroke="#a1b5d0" stroke-width="5" stroke-linecap="round" stroke-linejoin="round"/>
<path d="M876.8 511.5 L882.7 550" fill="none" stroke="#a1b5d0" stroke-width="4" stroke-linecap="round" stroke-linejoin="round"/>
<path d="M818 401 C818.7 408.2 819.4 431.9 822 444 C824.6 456.1 831.7 468.8 833.6 473.8" fill="none" stroke="#a1b5d0" stroke-width="2.5" stroke-linecap="round" stroke-linejoin="round"/>
<path d="M876.8 401 L878.8 450" fill="none" stroke="#a1b5d0" stroke-width="2" stroke-linecap="round" stroke-linejoin="round"/>
<path d="M867 454 L880.8 507" fill="none" stroke="#a1b5d0" stroke-width="2.5" stroke-linecap="round" stroke-linejoin="round"/>
<path d="M900.4 501 C901.7 503.0 908.7 505.2 908.3 513 C907.9 520.8 899.7 542.2 898 548" fill="none" stroke="#a1b5d0" stroke-width="4" stroke-linecap="round" stroke-linejoin="round"/>
<path d="M816 560 L880 536" fill="none" stroke="#a1b5d0" stroke-width="1.5" stroke-linecap="round" stroke-linejoin="round"/>
<path d="M908 392 C909.3 391.8 908.8 392.1 916 391 C923.2 389.9 939.0 389.4 951.5 385.5 C964.0 381.6 982.2 371.7 990.7 367.8 C999.2 363.9 999.3 365.3 1002.5 362 C1005.7 358.7 1008.8 350.3 1010 348" fill="none" stroke="#a1b5d0" stroke-width="6" stroke-linecap="round" stroke-linejoin="round"/>
<path d="M916 395.5 L971 395.5" fill="none" stroke="#a1b5d0" stroke-width="3" stroke-linecap="round" stroke-linejoin="round"/>
<path d="M951 386 L955 366 L985 362" fill="none" stroke="#a1b5d0" stroke-width="3" stroke-linecap="round" stroke-linejoin="round"/>
<path d="M949.5 505 C956.4 500.5 977.3 485.3 990.7 477.8 C1004.1 470.3 1020.8 464.6 1030 460 C1039.2 455.4 1036.4 454.2 1045.7 450 C1055.0 445.8 1074.1 438.8 1086 434.6 C1097.9 430.4 1111.8 426.6 1117 425" fill="none" stroke="#a1b5d0" stroke-width="3" stroke-linecap="round" stroke-linejoin="round"/>
<path d="M996.6 395.3 C1002.2 402.8 1021.8 431.3 1030 440.4 C1038.2 449.5 1043.1 448.4 1045.7 450" fill="none" stroke="#a1b5d0" stroke-width="3" stroke-linecap="round" stroke-linejoin="round"/>
<path d="M1055.6 340 L1049.7 434.6" fill="none" stroke="#a1b5d0" stroke-width="2.5" stroke-linecap="round" stroke-linejoin="round"/>
<path d="M1071 340 L1059.5 370" fill="none" stroke="#a1b5d0" stroke-width="2.5" stroke-linecap="round" stroke-linejoin="round"/>
<path d="M1030 340 L1032 360" fill="none" stroke="#a1b5d0" stroke-width="2" stroke-linecap="round" stroke-linejoin="round"/>
<path d="M986 462 L996 480" fill="none" stroke="#a1b5d0" stroke-width="2.5" stroke-linecap="round" stroke-linejoin="round"/>
<path d="M1010 470 L1034 492" fill="none" stroke="#a1b5d0" stroke-width="1.5" stroke-linecap="round" stroke-linejoin="round"/>
<path d="M1024 462 L1044 486" fill="none" stroke="#a1b5d0" stroke-width="1.5" stroke-linecap="round" stroke-linejoin="round"/>
<path d="M1036 456 L1050 478" fill="none" stroke="#a1b5d0" stroke-width="1.5" stroke-linecap="round" stroke-linejoin="round"/>
<path d="M1004 484 L1044 468" fill="none" stroke="#a1b5d0" stroke-width="1.5" stroke-linecap="round" stroke-linejoin="round"/>
<path d="M1016 494 L1052 478" fill="none" stroke="#a1b5d0" stroke-width="1.5" stroke-linecap="round" stroke-linejoin="round"/>
<path d="M1063 452 L1075 490" fill="none" stroke="#a1b5d0" stroke-width="2" stroke-linecap="round" stroke-linejoin="round"/>
<path d="M1127 366 C1146.7 366.5 1206.8 369.1 1245 368.8 C1283.2 368.5 1337.5 364.8 1356 364" fill="none" stroke="#a1b5d0" stroke-width="4.5" stroke-linecap="round" stroke-linejoin="round"/>
<path d="M1131 412 C1150.0 412.5 1212.2 415.5 1245 415 C1277.8 414.5 1309.0 410.7 1327.5 409 C1346.0 407.3 1351.2 405.7 1356 405" fill="none" stroke="#a1b5d0" stroke-width="4.5" stroke-linecap="round" stroke-linejoin="round"/>
<path d="M1135 436 C1136.3 435.1 1125.3 431.5 1143 430.6 C1160.7 429.7 1224.7 430.6 1241 430.6" fill="none" stroke="#a1b5d0" stroke-width="2" stroke-linecap="round" stroke-linejoin="round"/>
<path d="M1168.4 367.8 L1164.5 412" fill="none" stroke="#a1b5d0" stroke-width="3.5" stroke-linecap="round" stroke-linejoin="round"/>
<path d="M1245 340 L1245 415" fill="none" stroke="#a1b5d0" stroke-width="5" stroke-linecap="round" stroke-linejoin="round"/>
<path d="M1274.5 367.8 L1278.4 411" fill="none" stroke="#a1b5d0" stroke-width="3.5" stroke-linecap="round" stroke-linejoin="round"/>
<path d="M1325.6 367.8 C1326.1 378.9 1328.5 416.9 1328.5 434.6 C1328.5 452.3 1326.1 467.4 1325.6 474" fill="none" stroke="#a1b5d0" stroke-width="4" stroke-linecap="round" stroke-linejoin="round"/>
<path d="M1356 340 C1355.3 349.2 1352.0 375.8 1352 395 C1352.0 414.2 1355.3 445.0 1356 455" fill="none" stroke="#a1b5d0" stroke-width="9" stroke-linecap="round" stroke-linejoin="round"/>
<path d="M1284.4 430.6 L1327.5 429.4" fill="none" stroke="#a1b5d0" stroke-width="2" stroke-linecap="round" stroke-linejoin="round"/>
<path d="M1241 432 L1246 466 L1254 468 L1255 476" fill="none" stroke="#a1b5d0" stroke-width="1.2" stroke-linecap="round" stroke-linejoin="round"/>
<path d="M1332 436 C1334.3 435.7 1343.3 428.3 1346 434 C1348.7 439.7 1347.7 464.0 1348 470" fill="none" stroke="#a1b5d0" stroke-width="2" stroke-linecap="round" stroke-linejoin="round"/>
<path d="M1340 436 L1342 452 L1347 452" fill="none" stroke="#a1b5d0" stroke-width="1.5" stroke-linecap="round" stroke-linejoin="round"/>
<path d="M1141 523 C1152.5 522.0 1189.8 519.7 1209.7 517 C1229.7 514.3 1247.0 508.0 1260.7 507 C1274.4 506.0 1286.8 510.3 1292 511" fill="none" stroke="#a1b5d0" stroke-width="4" stroke-linecap="round" stroke-linejoin="round"/>
<path d="M1260.7 485.6 L1258.8 507" fill="none" stroke="#a1b5d0" stroke-width="4" stroke-linecap="round" stroke-linejoin="round"/>
<path d="M1292 483.7 C1294.3 489.4 1301.4 506.9 1306 518 C1310.6 529.0 1316.0 536.7 1319.7 550 C1323.5 563.3 1327.0 590.0 1328.5 598" fill="none" stroke="#a1b5d0" stroke-width="5" stroke-linecap="round" stroke-linejoin="round"/>
<path d="M1300 501 C1304.6 499.8 1319.7 488.2 1327.5 493.5 C1335.3 498.8 1348.3 523.3 1347 532.7 C1345.7 542.1 1324.2 547.1 1319.7 550" fill="none" stroke="#a1b5d0" stroke-width="4" stroke-linecap="round" stroke-linejoin="round"/>
<path d="M1311.8 523 L1337.3 513" fill="none" stroke="#a1b5d0" stroke-width="4" stroke-linecap="round" stroke-linejoin="round"/>
<path d="M1292 511 C1290.1 513.0 1280.4 516.5 1280.4 523 C1280.4 529.5 1288.7 536.5 1292 550 C1295.3 563.5 1299.1 595.0 1300.5 604" fill="none" stroke="#a1b5d0" stroke-width="4" stroke-linecap="round" stroke-linejoin="round"/>
<path d="M1225.4 483.7 L1225.4 550" fill="none" stroke="#a1b5d0" stroke-width="2" stroke-linecap="round" stroke-linejoin="round"/>
<path d="M1164.5 527 C1174.0 527.3 1207.8 525.2 1221.5 529 C1235.2 532.8 1242.8 546.5 1247 550" fill="none" stroke="#a1b5d0" stroke-width="3" stroke-linecap="round" stroke-linejoin="round"/>
<path d="M1150 538 C1154.3 537.3 1166.0 534.3 1176 534 C1186.0 533.7 1203.0 533.7 1210 536 C1217.0 538.3 1216.7 546.0 1218 548" fill="none" stroke="#a1b5d0" stroke-width="2.5" stroke-linecap="round" stroke-linejoin="round"/>
<path d="M1182 538 C1181.7 539.7 1177.0 545.7 1180 548 C1183.0 550.3 1196.7 551.3 1200 552" fill="none" stroke="#a1b5d0" stroke-width="2" stroke-linecap="round" stroke-linejoin="round"/>
<path d="M1139 496 L1137 520" fill="none" stroke="#a1b5d0" stroke-width="2" stroke-linecap="round" stroke-linejoin="round"/>
<path d="M1262 490 L1272 488" fill="none" stroke="#a1b5d0" stroke-width="2" stroke-linecap="round" stroke-linejoin="round"/>
<path d="M1270 530 L1282 520" fill="none" stroke="#a1b5d0" stroke-width="2" stroke-linecap="round" stroke-linejoin="round"/>
<path d="M1094 510 L1096 526" fill="none" stroke="#a1b5d0" stroke-width="1.5" stroke-linecap="round" stroke-linejoin="round"/>
<path d="M1098 536 L1108 534 L1110 550" fill="none" stroke="#a1b5d0" stroke-width="1.5" stroke-linecap="round" stroke-linejoin="round"/>
<path d="M1000 540 C1001.3 543.3 1005.0 554.0 1008 560 C1011.0 566.0 1016.1 573.3 1017.7 576" fill="none" stroke="#a1b5d0" stroke-width="5" stroke-linecap="round" stroke-linejoin="round"/>
<path d="M1000 540 L1012 545 L1010 556" fill="none" stroke="#a1b5d0" stroke-width="1.5" stroke-linecap="round" stroke-linejoin="round"/>
<path d="M826 628 C837.3 623.0 877.3 605.7 894 598 C910.7 590.3 916.7 583.3 926 582 C935.3 580.7 946.0 588.7 950 590" fill="none" stroke="#a1b5d0" stroke-width="3" stroke-linecap="round" stroke-linejoin="round"/>
<path d="M834 672 C847.3 667.3 889.7 652.0 914 644 C938.3 636.0 969.0 627.3 980 624" fill="none" stroke="#a1b5d0" stroke-width="4" stroke-linecap="round" stroke-linejoin="round"/>
<path d="M870 692 C880.7 688.0 910.7 676.7 934 668 C957.3 659.3 997.3 644.7 1010 640" fill="none" stroke="#a1b5d0" stroke-width="5" stroke-linecap="round" stroke-linejoin="round"/>
<path d="M882 718.4 C893.3 718.0 929.7 717.0 950 716 C970.3 715.0 995.0 713.0 1004 712.4" fill="none" stroke="#a1b5d0" stroke-width="4" stroke-linecap="round" stroke-linejoin="round"/>
<path d="M1004 718 L1086 718" fill="none" stroke="#a1b5d0" stroke-width="4" stroke-linecap="round" stroke-linejoin="round"/>
<path d="M936 668 C937.0 674.7 939.0 695.0 942 708 C945.0 721.0 952.0 739.7 954 746" fill="none" stroke="#a1b5d0" stroke-width="5" stroke-linecap="round" stroke-linejoin="round"/>
<path d="M962 672 L962 728" fill="none" stroke="#a1b5d0" stroke-width="4" stroke-linecap="round" stroke-linejoin="round"/>
<path d="M890 692 L898 746" fill="none" stroke="#a1b5d0" stroke-width="5" stroke-linecap="round" stroke-linejoin="round"/>
<path d="M860 664 L870 746" fill="none" stroke="#a1b5d0" stroke-width="4" stroke-linecap="round" stroke-linejoin="round"/>
<path d="M1004 584 L1086 554" fill="none" stroke="#a1b5d0" stroke-width="5" stroke-linecap="round" stroke-linejoin="round"/>
<path d="M1046.5 570 L1024.5 640" fill="none" stroke="#a1b5d0" stroke-width="3" stroke-linecap="round" stroke-linejoin="round"/>
<path d="M1016 682 C1020.8 682.0 1036.4 683.3 1044.5 682 C1052.6 680.7 1060.8 680.3 1064.5 674 C1068.2 667.7 1062.9 649.3 1066.5 644 C1070.1 638.7 1082.8 642.3 1086 642" fill="none" stroke="#a1b5d0" stroke-width="5" stroke-linecap="round" stroke-linejoin="round"/>
<path d="M1068 646 L1072 744" fill="none" stroke="#a1b5d0" stroke-width="5" stroke-linecap="round" stroke-linejoin="round"/>
<path d="M1042.5 682 L1054.5 718" fill="none" stroke="#a1b5d0" stroke-width="3" stroke-linecap="round" stroke-linejoin="round"/>
<path d="M1036 608 C1039.0 607.7 1045.7 608.0 1054 606 C1062.3 604.0 1080.7 597.7 1086 596" fill="none" stroke="#a1b5d0" stroke-width="2.5" stroke-linecap="round" stroke-linejoin="round"/>
<path d="M1050 608 L1048 624" fill="none" stroke="#a1b5d0" stroke-width="2.5" stroke-linecap="round" stroke-linejoin="round"/>
<path d="M1086 574 C1084.3 575.0 1078.0 576.3 1076 580 C1074.0 583.7 1074.3 593.3 1074 596" fill="none" stroke="#a1b5d0" stroke-width="2" stroke-linecap="round" stroke-linejoin="round"/>
<path d="M1072 698 L1086 696" fill="none" stroke="#a1b5d0" stroke-width="3" stroke-linecap="round" stroke-linejoin="round"/>
<path d="M1054 730 L1056 744" fill="none" stroke="#a1b5d0" stroke-width="3" stroke-linecap="round" stroke-linejoin="round"/>
<path d="M934 572 C939.3 571.7 960.0 563.7 966 570 C972.0 576.3 977.3 602.3 970 610 C962.7 617.7 930.0 615.0 922 616" fill="none" stroke="#a1b5d0" stroke-width="3" stroke-linecap="round" stroke-linejoin="round"/>
<path d="M954 572 L956 586" fill="none" stroke="#a1b5d0" stroke-width="3" stroke-linecap="round" stroke-linejoin="round"/>
<path d="M936 586 L978 582" fill="none" stroke="#a1b5d0" stroke-width="2.5" stroke-linecap="round" stroke-linejoin="round"/>
<path d="M920 646 L942 688" fill="none" stroke="#a1b5d0" stroke-width="3" stroke-linecap="round" stroke-linejoin="round"/>
<path d="M942 638 L950 660" fill="none" stroke="#a1b5d0" stroke-width="3" stroke-linecap="round" stroke-linejoin="round"/>
<path d="M960 632 L968 668" fill="none" stroke="#a1b5d0" stroke-width="3" stroke-linecap="round" stroke-linejoin="round"/>
<path d="M980 624 L990 642" fill="none" stroke="#a1b5d0" stroke-width="3" stroke-linecap="round" stroke-linejoin="round"/>
<path d="M896 652 L904 676" fill="none" stroke="#a1b5d0" stroke-width="2" stroke-linecap="round" stroke-linejoin="round"/>
<path d="M880 606 L890 650" fill="none" stroke="#a1b5d0" stroke-width="2" stroke-linecap="round" stroke-linejoin="round"/>
<path d="M814 654 C821.0 653.3 847.3 644.0 856 650 C864.7 656.0 864.3 683.3 866 690" fill="none" stroke="#a1b5d0" stroke-width="2.5" stroke-linecap="round" stroke-linejoin="round"/>
<path d="M836 672 L870 664 L874 650" fill="none" stroke="#a1b5d0" stroke-width="2.5" stroke-linecap="round" stroke-linejoin="round"/>
<path d="M814 624 L830 620" fill="none" stroke="#a1b5d0" stroke-width="3" stroke-linecap="round" stroke-linejoin="round"/>
<path d="M996 596 C995.0 598.3 989.3 602.7 990 610 C990.7 617.3 998.3 635.0 1000 640" fill="none" stroke="#a1b5d0" stroke-width="2.5" stroke-linecap="round" stroke-linejoin="round"/>
<path d="M990 652 L992 664 L1008 662" fill="none" stroke="#a1b5d0" stroke-width="2" stroke-linecap="round" stroke-linejoin="round"/>
<path d="M958 680 L956 706" fill="none" stroke="#a1b5d0" stroke-width="2" stroke-linecap="round" stroke-linejoin="round"/>
<path d="M898 692 L912 698 L910 702" fill="none" stroke="#a1b5d0" stroke-width="2" stroke-linecap="round" stroke-linejoin="round"/>
<path d="M962 700 L990 696" fill="none" stroke="#a1b5d0" stroke-width="2.5" stroke-linecap="round" stroke-linejoin="round"/>
<path d="M916 724 L920 746" fill="none" stroke="#a1b5d0" stroke-width="3" stroke-linecap="round" stroke-linejoin="round"/>
<path d="M932 724 L934 746" fill="none" stroke="#a1b5d0" stroke-width="2" stroke-linecap="round" stroke-linejoin="round"/>
<path d="M1092 540 C1092.0 542.3 1091.0 536.0 1092 554 C1093.0 572.0 1096.0 616.0 1098 648 C1100.0 680.0 1103.0 729.7 1104 746" fill="none" stroke="#a1b5d0" stroke-width="5" stroke-linecap="round" stroke-linejoin="round"/>
<path d="M1084 554 L1120 552" fill="none" stroke="#a1b5d0" stroke-width="4" stroke-linecap="round" stroke-linejoin="round"/>
<path d="M1084 640 L1096 638" fill="none" stroke="#a1b5d0" stroke-width="3" stroke-linecap="round" stroke-linejoin="round"/>
<path d="M1084 696 L1098 694" fill="none" stroke="#a1b5d0" stroke-width="3" stroke-linecap="round" stroke-linejoin="round"/>
<path d="M1106 672 L1126 668" fill="none" stroke="#a1b5d0" stroke-width="3" stroke-linecap="round" stroke-linejoin="round"/>
<path d="M1084 596 L1094 594" fill="none" stroke="#a1b5d0" stroke-width="2" stroke-linecap="round" stroke-linejoin="round"/>
<path d="M1168 666 C1168.7 671.7 1170.3 686.7 1172 700 C1173.7 713.3 1177.0 738.3 1178 746" fill="none" stroke="#a1b5d0" stroke-width="5" stroke-linecap="round" stroke-linejoin="round"/>
<path d="M1165 548 L1166 594" fill="none" stroke="#a1b5d0" stroke-width="2.5" stroke-linecap="round" stroke-linejoin="round"/>
<path d="M1148 668 C1153.3 667.3 1167.3 669.3 1180 664 C1192.7 658.7 1209.9 643.3 1224 636 C1238.1 628.7 1252.3 624.0 1264.4 620 C1276.5 616.0 1286.5 615.3 1296.5 612 C1306.5 608.7 1314.6 602.7 1324.5 600 C1334.4 597.3 1350.8 596.7 1356 596" fill="none" stroke="#a1b5d0" stroke-width="5" stroke-linecap="round" stroke-linejoin="round"/>
<path d="M1228 548 C1228.7 555.7 1230.7 580.7 1232 594 C1233.3 607.3 1236.0 618.3 1236 628 C1236.0 637.7 1232.0 638.7 1232 652 C1232.0 665.3 1235.3 698.7 1236 708" fill="none" stroke="#a1b5d0" stroke-width="4" stroke-linecap="round" stroke-linejoin="round"/>
<path d="M1232 594 C1240.7 591.7 1263.7 585.7 1284.4 580 C1305.1 574.3 1344.1 563.3 1356 560" fill="none" stroke="#a1b5d0" stroke-width="5" stroke-linecap="round" stroke-linejoin="round"/>
<path d="M1248.4 548 C1252.0 553.3 1262.0 569.3 1270 580 C1278.0 590.7 1290.4 604.7 1296.5 612 C1302.6 619.3 1305.5 613.0 1306.5 624 C1307.5 635.0 1303.2 669.0 1302.5 678" fill="none" stroke="#a1b5d0" stroke-width="5" stroke-linecap="round" stroke-linejoin="round"/>
<path d="M1292.5 548 L1300.5 604" fill="none" stroke="#a1b5d0" stroke-width="4" stroke-linecap="round" stroke-linejoin="round"/>
<path d="M1324.5 600 L1356 606" fill="none" stroke="#a1b5d0" stroke-width="4" stroke-linecap="round" stroke-linejoin="round"/>
<path d="M1300 614 L1356 618" fill="none" stroke="#a1b5d0" stroke-width="3" stroke-linecap="round" stroke-linejoin="round"/>
<path d="M1262.4 624 C1262.4 630.0 1256.1 653.0 1262.4 660 C1268.8 667.0 1294.2 665.0 1300.5 666" fill="none" stroke="#a1b5d0" stroke-width="3" stroke-linecap="round" stroke-linejoin="round"/>
<path d="M1262.4 660 C1260.0 663.3 1254.4 676.0 1248 680 C1241.6 684.0 1229.0 688.7 1224 684 C1219.0 679.3 1219.0 657.3 1218 652" fill="none" stroke="#a1b5d0" stroke-width="2.5" stroke-linecap="round" stroke-linejoin="round"/>
<path d="M1174 630 C1175.0 629.3 1172.3 626.0 1180 626 C1187.7 626.0 1212.0 633.0 1220 630 C1228.0 627.0 1226.7 611.7 1228 608" fill="none" stroke="#a1b5d0" stroke-width="2" stroke-linecap="round" stroke-linejoin="round"/>
<path d="M1178 646 L1224 636" fill="none" stroke="#a1b5d0" stroke-width="2" stroke-linecap="round" stroke-linejoin="round"/>
<path d="M1144 594 L1166 593" fill="none" stroke="#a1b5d0" stroke-width="2" stroke-linecap="round" stroke-linejoin="round"/>
<path d="M1160 600 C1159.7 602.0 1155.3 610.0 1158 612 C1160.7 614.0 1173.3 614.0 1176 612 C1178.7 610.0 1176.7 602.0 1174 600 C1171.3 598.0 1162.3 600.0 1160 600" fill="none" stroke="#a1b5d0" stroke-width="2" stroke-linecap="round" stroke-linejoin="round"/>
<path d="M1288 664 L1290 678 L1302 676" fill="none" stroke="#a1b5d0" stroke-width="2" stroke-linecap="round" stroke-linejoin="round"/>
<path d="M1318 654 C1321.3 654.3 1334.2 654.0 1338 656 C1341.8 658.0 1340.5 664.3 1341 666" fill="none" stroke="#a1b5d0" stroke-width="1.5" stroke-linecap="round" stroke-linejoin="round"/>
<path d="M1180 690 C1184.0 691.0 1199.0 692.3 1204 696 C1209.0 699.7 1209.0 709.3 1210 712" fill="none" stroke="#a1b5d0" stroke-width="2" stroke-linecap="round" stroke-linejoin="round"/>
<path d="M1290 716 L1296 744" fill="none" stroke="#a1b5d0" stroke-width="3" stroke-linecap="round" stroke-linejoin="round"/>
<path d="M544 361 C548.0 362.0 552.0 365.3 568 367 C584.0 368.7 617.8 369.6 640 371 C662.2 372.4 681.0 373.9 701 375.6 C721.0 377.3 740.8 379.0 760 381 C779.2 383.0 793.0 385.3 816 387.4 C839.0 389.5 884.3 392.5 898 393.5" fill="none" stroke="#a1b5d0" stroke-width="9" stroke-linecap="round" stroke-linejoin="round"/>
<path d="M609 526.5 L700 526.5 L796 526" fill="none" stroke="#a1b5d0" stroke-width="11.5" stroke-linecap="round" stroke-linejoin="round"/>
<path d="M749 372 C749.2 374.2 748.8 375.7 750 385.5 C751.2 395.3 751.7 417.2 756 430.6 C760.3 444.0 769.8 453.6 775.7 466 C781.6 478.4 786.9 491.3 791.4 505 C795.9 518.7 799.1 532.5 802.6 548 C806.1 563.5 810.0 587.0 812.6 598 C815.2 609.0 817.1 611.3 818 614" fill="none" stroke="#a1b5d0" stroke-width="9" stroke-linecap="round" stroke-linejoin="round"/>
<path d="M818 608 C818.7 613.3 820.7 630.0 822 640 C823.3 650.0 823.3 650.3 826 668 C828.7 685.7 836.0 733.0 838 746" fill="none" stroke="#a1b5d0" stroke-width="6" stroke-linecap="round" stroke-linejoin="round"/>
<path d="M783.6 481.7 C789.0 480.1 806.7 474.2 816 471.9 C825.3 469.6 823.5 471.9 839.5 468 C855.5 464.1 896.9 451.9 912 448.3 C927.1 444.7 927.0 446.8 930 446.5" fill="none" stroke="#a1b5d0" stroke-width="12" stroke-linecap="round" stroke-linejoin="round"/>
<path d="M925 446.5 L944 445" fill="none" stroke="#a1b5d0" stroke-width="8" stroke-linecap="butt" stroke-linejoin="round"/>
<path d="M650 688 C660.3 683.3 692.9 668.7 712 660 C731.1 651.3 747.2 643.7 764.5 636 C781.8 628.3 801.1 621.7 816 614 C830.9 606.3 840.3 597.3 854 590 C867.7 582.7 886.0 577.0 898 570 C910.0 563.0 917.4 556.2 926 548 C934.6 539.8 945.6 525.5 949.5 521" fill="none" stroke="#a1b5d0" stroke-width="12" stroke-linecap="round" stroke-linejoin="round"/>
<path d="M949.5 523 C953.8 521.9 966.5 518.9 975 516.5 C983.5 514.1 990.5 512.0 1000.5 508.8 C1010.5 505.6 1023.6 500.4 1035 497.3 C1046.4 494.2 1057.5 492.3 1069 490.5 C1080.5 488.7 1096.0 487.1 1104 486.5 C1112.0 485.9 1114.8 486.9 1117 487" fill="none" stroke="#a1b5d0" stroke-width="11" stroke-linecap="round" stroke-linejoin="round"/>
<path d="M1117 487.5 C1120.7 488.2 1117.7 492.4 1139 491.5 C1160.3 490.6 1208.8 485.2 1245 482 C1281.2 478.8 1337.5 473.7 1356 472" fill="none" stroke="#a1b5d0" stroke-width="10" stroke-linecap="round" stroke-linejoin="round"/>
<path d="M899 330 C899.2 334.3 899.5 346.8 900.4 356 C901.3 365.2 902.0 375.7 904.3 385.5 C906.6 395.3 910.7 404.2 914 415 C917.3 425.8 922.3 444.2 924 450" fill="none" stroke="#a1b5d0" stroke-width="13" stroke-linecap="round" stroke-linejoin="round"/>
<path d="M914 415 C915.7 420.8 920.4 438.6 924 450 C927.6 461.4 931.5 473.2 935.8 483.7 C940.0 494.2 947.2 508.1 949.5 513" fill="none" stroke="#a1b5d0" stroke-width="10.5" stroke-linecap="round" stroke-linejoin="round"/>
<path d="M949.5 513 C950.9 516.7 954.6 529.2 958 535 C961.4 540.8 963.9 541.5 970 548 C976.1 554.5 987.3 564.0 994.4 574 C1001.5 584.0 1008.4 596.3 1012.4 608 C1016.4 619.7 1018.1 631.3 1018.4 644 C1018.7 656.7 1016.7 671.7 1014.4 684 C1012.1 696.3 1008.5 707.0 1004.4 718 C1000.3 729.0 992.4 744.7 990 750" fill="none" stroke="#a1b5d0" stroke-width="7" stroke-linecap="round" stroke-linejoin="round"/>
<path d="M1117 330 C1117.0 334.3 1116.3 338.6 1117 356 C1117.7 373.4 1119.5 413.9 1121 434.6 C1122.5 455.3 1125.2 472.4 1126 480" fill="none" stroke="#a1b5d0" stroke-width="19" stroke-linecap="round" stroke-linejoin="round"/>
<path d="M1126 480 C1126.3 486.7 1127.2 508.3 1128 520 C1128.8 531.7 1129.6 530.0 1130.5 550 C1131.4 570.0 1132.0 606.7 1133.5 640 C1135.0 673.3 1138.5 731.7 1139.5 750" fill="none" stroke="#a1b5d0" stroke-width="23.5" stroke-linecap="round" stroke-linejoin="round"/>
<path d="M1122 500 C1123.3 510.0 1128.0 535.3 1130 560 C1132.0 584.7 1132.3 616.3 1134 648 C1135.7 679.7 1139.0 733.0 1140 750" fill="none" stroke="#bccadd" stroke-width="1.6" stroke-linecap="round" stroke-linejoin="round"/>
<path d="M606 330 C606.0 338.5 606.2 363.5 606 381 C605.8 398.5 605.1 419.5 604.5 435 C603.9 450.5 602.5 461.0 602.5 474 C602.5 487.0 602.1 500.7 604.5 513 C606.9 525.3 614.1 533.8 617 548 C619.9 562.2 619.8 583.0 622 598 C624.2 613.0 626.8 625.0 630 638 C633.2 651.0 635.3 662.3 641 676 C646.7 689.7 653.8 707.3 664 720 C674.2 732.7 695.7 746.7 702 752" fill="none" stroke="#a1b5d0" stroke-width="23" stroke-linecap="round" stroke-linejoin="round"/>
<path d="M605 330 C605.0 338.5 605.2 363.5 605 381 C604.8 398.5 604.1 419.5 603.5 435 C602.9 450.5 601.5 461.0 601.5 474 C601.5 487.0 601.1 500.7 603.5 513 C605.9 525.3 613.1 533.8 616 548 C618.9 562.2 618.8 583.0 621 598 C623.2 613.0 627.7 631.3 629 638" fill="none" stroke="#bccadd" stroke-width="2" stroke-linecap="round" stroke-linejoin="round"/>
<path d="M630 676 C630.3 678.7 633.0 684.7 632 692 C631.0 699.3 627.3 710.3 624 720 C620.7 729.7 614.0 745.0 612 750" fill="none" stroke="#a1b5d0" stroke-width="10" stroke-linecap="round" stroke-linejoin="round"/>
<path d="M560 744 C566.7 740.3 586.7 726.7 600 722 C613.3 717.3 633.3 717.0 640 716" fill="none" stroke="#a1b5d0" stroke-width="8" stroke-linecap="round" stroke-linejoin="round"/>
<path d="M1218 752 C1222.3 745.3 1234.6 721.2 1244 712 C1253.4 702.8 1262.7 700.0 1274.4 696.5 C1286.2 693.0 1300.2 691.6 1314.5 691 C1328.8 690.4 1352.4 692.7 1360 693" fill="none" stroke="#a1b5d0" stroke-width="13" stroke-linecap="round" stroke-linejoin="round"/>
<path d="M1234 752 C1239.1 746.2 1252.7 724.9 1264.4 717 C1276.2 709.1 1288.6 706.5 1304.5 704.5 C1320.4 702.5 1350.8 704.9 1360 705" fill="none" stroke="#a1b5d0" stroke-width="10" stroke-linecap="round" stroke-linejoin="round"/>
<rect x="1306" y="340" width="40" height="26" rx="2" fill="#fff" fill-opacity=".85"/>
<text x="692.2" y="530.46" font-size="13.5" font-weight="400" fill="#202022" text-anchor="middle" textLength="61" lengthAdjust="spacing" style="paint-order:stroke;stroke:#fff;stroke-width:3px;stroke-linejoin:round" >Al Khail St</text>
<text x="692.2" y="530.46" font-size="13.5" font-weight="400" fill="#202022" text-anchor="middle" textLength="61" lengthAdjust="spacing" stroke="#202022" stroke-width="0.38" >Al Khail St</text>
<text x="799.05" y="548.61" font-size="13.5" font-weight="400" fill="#202022" text-anchor="middle" textLength="111.833" lengthAdjust="spacing" transform="rotate(75.9762 799.05 543.75)" style="paint-order:stroke;stroke:#fff;stroke-width:3px;stroke-linejoin:round" >Abdulla Bin Thani St</text>
<text x="799.05" y="548.61" font-size="13.5" font-weight="400" fill="#202022" text-anchor="middle" textLength="111.833" lengthAdjust="spacing" transform="rotate(75.9762 799.05 543.75)" stroke="#202022" stroke-width="0.38" >Abdulla Bin Thani St</text>
<text x="852.3" y="467.54" font-size="14" font-weight="400" fill="#2a2a2a" text-anchor="middle" textLength="27" lengthAdjust="spacingAndGlyphs" transform="rotate(-15 852.3 462.5)" style="paint-order:stroke;stroke:#fff;stroke-width:3px;stroke-linejoin:round" >عكاظ</text>
<text x="979" y="495.68" font-size="13" font-weight="400" fill="#2a2a2a" text-anchor="middle" textLength="50" lengthAdjust="spacingAndGlyphs" transform="rotate(-33 979 491)" style="paint-order:stroke;stroke:#fff;stroke-width:3px;stroke-linejoin:round" >سوق واقف</text>
<text x="1192.5" y="372.26" font-size="13.5" font-weight="400" fill="#202022" text-anchor="middle" textLength="73.6" lengthAdjust="spacing" transform="rotate(3 1192.5 367.4)" style="paint-order:stroke;stroke:#fff;stroke-width:3px;stroke-linejoin:round" >Al Tarbiya St</text>
<text x="1192.5" y="372.26" font-size="13.5" font-weight="400" fill="#202022" text-anchor="middle" textLength="73.6" lengthAdjust="spacing" transform="rotate(3 1192.5 367.4)" stroke="#202022" stroke-width="0.15" >Al Tarbiya St</text>
<text x="1287" y="370.86" font-size="13.5" font-weight="400" fill="#202022" text-anchor="middle" textLength="72" lengthAdjust="spacing" transform="rotate(-3 1287 366)" style="paint-order:stroke;stroke:#fff;stroke-width:3px;stroke-linejoin:round" >Al Tarbiya St</text>
<text x="1287" y="370.86" font-size="13.5" font-weight="400" fill="#202022" text-anchor="middle" textLength="72" lengthAdjust="spacing" transform="rotate(-3 1287 366)" stroke="#202022" stroke-width="0.15" >Al Tarbiya St</text>
<text x="1287" y="418.36" font-size="13.5" font-weight="400" fill="#202022" text-anchor="middle" textLength="72" lengthAdjust="spacing" transform="rotate(-5 1287 413.5)" style="paint-order:stroke;stroke:#fff;stroke-width:3px;stroke-linejoin:round" >Al Ahmed St</text>
<text x="1287" y="418.36" font-size="13.5" font-weight="400" fill="#202022" text-anchor="middle" textLength="72" lengthAdjust="spacing" transform="rotate(-5 1287 413.5)" stroke="#202022" stroke-width="0.15" >Al Ahmed St</text>
<text x="1191" y="488.56" font-size="13.5" font-weight="400" fill="#202022" text-anchor="middle" textLength="108.5" lengthAdjust="spacing" transform="rotate(-4 1191 483.7)" style="paint-order:stroke;stroke:#fff;stroke-width:3px;stroke-linejoin:round" >Ali Bin Abdullah St</text>
<text x="1191" y="488.56" font-size="13.5" font-weight="400" fill="#202022" text-anchor="middle" textLength="108.5" lengthAdjust="spacing" transform="rotate(-4 1191 483.7)" stroke="#202022" stroke-width="0.38" >Ali Bin Abdullah St</text>
<text x="673" y="590.56" font-size="13.5" font-weight="400" fill="#202022" text-anchor="middle" textLength="70" lengthAdjust="spacing" style="paint-order:stroke;stroke:#fff;stroke-width:3px;stroke-linejoin:round" >Al Mariah St</text>
<text x="673" y="590.56" font-size="13.5" font-weight="400" fill="#202022" text-anchor="middle" textLength="70" lengthAdjust="spacing" stroke="#202022" stroke-width="0.15" >Al Mariah St</text>
<text x="585.5" y="587.5" font-size="12.5" font-weight="400" fill="#202022" text-anchor="middle" textLength="37.108" lengthAdjust="spacing" transform="rotate(75.9638 585.5 583)" style="paint-order:stroke;stroke:#fff;stroke-width:3px;stroke-linejoin:round" >Awf St</text>
<text x="585.5" y="587.5" font-size="12.5" font-weight="400" fill="#202022" text-anchor="middle" textLength="37.108" lengthAdjust="spacing" transform="rotate(75.9638 585.5 583)" stroke="#202022" stroke-width="0.15" >Awf St</text>
<text x="762.55" y="634.11" font-size="13.5" font-weight="400" fill="#202022" text-anchor="middle" textLength="105.078" lengthAdjust="spacing" transform="rotate(-23.8573 762.55 629.25)" style="paint-order:stroke;stroke:#fff;stroke-width:3px;stroke-linejoin:round" >Wadi Msheireb St</text>
<text x="762.55" y="634.11" font-size="13.5" font-weight="400" fill="#202022" text-anchor="middle" textLength="105.078" lengthAdjust="spacing" transform="rotate(-23.8573 762.55 629.25)" stroke="#202022" stroke-width="0.38" >Wadi Msheireb St</text>
<text x="737.25" y="691.68" font-size="13" font-weight="400" fill="#202022" text-anchor="middle" textLength="45.6207" lengthAdjust="spacing" transform="rotate(-27.4076 737.25 687)" style="paint-order:stroke;stroke:#fff;stroke-width:3px;stroke-linejoin:round" >Nishad</text>
<text x="737.25" y="691.68" font-size="13" font-weight="400" fill="#202022" text-anchor="middle" textLength="45.6207" lengthAdjust="spacing" transform="rotate(-27.4076 737.25 687)" stroke="#202022" stroke-width="0.2" >Nishad</text>
<text x="759.6" y="669.48" font-size="13" font-weight="400" fill="#202022" text-anchor="middle" textLength="13" lengthAdjust="spacing" transform="rotate(-90 759.6 664.8)" style="paint-order:stroke;stroke:#fff;stroke-width:3px;stroke-linejoin:round" >St</text>
<text x="759.6" y="669.48" font-size="13" font-weight="400" fill="#202022" text-anchor="middle" textLength="13" lengthAdjust="spacing" transform="rotate(-90 759.6 664.8)" stroke="#202022" stroke-width="0.2" >St</text>
<text x="864.5" y="617.68" font-size="13" font-weight="400" fill="#202022" text-anchor="middle" textLength="65.307" lengthAdjust="spacing" transform="rotate(-25.3879 864.5 613)" style="paint-order:stroke;stroke:#fff;stroke-width:3px;stroke-linejoin:round" >Al Najada St</text>
<text x="864.5" y="617.68" font-size="13" font-weight="400" fill="#202022" text-anchor="middle" textLength="65.307" lengthAdjust="spacing" transform="rotate(-25.3879 864.5 613)" stroke="#202022" stroke-width="0.15" >Al Najada St</text>
<text x="894" y="687.93" font-size="13" font-weight="400" fill="#202022" text-anchor="middle" textLength="76.3823" lengthAdjust="spacing" transform="rotate(-19.5024 894 683.25)" style="paint-order:stroke;stroke:#fff;stroke-width:3px;stroke-linejoin:round" >Maymoun St</text>
<text x="894" y="687.93" font-size="13" font-weight="400" fill="#202022" text-anchor="middle" textLength="76.3823" lengthAdjust="spacing" transform="rotate(-19.5024 894 683.25)" stroke="#202022" stroke-width="0.2" >Maymoun St</text>
<text x="947.7" y="716.18" font-size="13" font-weight="400" fill="#202022" text-anchor="middle" textLength="87.5" lengthAdjust="spacing" transform="rotate(-3 947.7 711.5)" style="paint-order:stroke;stroke:#fff;stroke-width:3px;stroke-linejoin:round" >Al Jassasiya St</text>
<text x="947.7" y="716.18" font-size="13" font-weight="400" fill="#202022" text-anchor="middle" textLength="87.5" lengthAdjust="spacing" transform="rotate(-3 947.7 711.5)" stroke="#202022" stroke-width="0.15" >Al Jassasiya St</text>
<text x="907.25" y="623.82" font-size="12" font-weight="400" fill="#2a2a2a" text-anchor="middle" textLength="53.8447" lengthAdjust="spacingAndGlyphs" transform="rotate(79.8379 907.25 619.5)" style="paint-order:stroke;stroke:#fff;stroke-width:3px;stroke-linejoin:round" >ابن حذافة</text>
<text x="933.75" y="613.32" font-size="12" font-weight="400" fill="#2a2a2a" text-anchor="middle" textLength="56.4646" lengthAdjust="spacingAndGlyphs" transform="rotate(73.0092 933.75 609)" style="paint-order:stroke;stroke:#fff;stroke-width:3px;stroke-linejoin:round" >بئر الحسين</text>
<text x="1100" y="673.68" font-size="13" font-weight="400" fill="#202022" text-anchor="middle" textLength="66.4831" lengthAdjust="spacing" transform="rotate(83.0888 1100 669)" style="paint-order:stroke;stroke:#fff;stroke-width:3px;stroke-linejoin:round" >Al Aasim St</text>
<text x="1100" y="673.68" font-size="13" font-weight="400" fill="#202022" text-anchor="middle" textLength="66.4831" lengthAdjust="spacing" transform="rotate(83.0888 1100 669)" stroke="#202022" stroke-width="0.38" >Al Aasim St</text>
<text x="1129" y="633.5" font-size="12.5" font-weight="400" fill="#2a2a2a" text-anchor="middle" textLength="66.1211" lengthAdjust="spacingAndGlyphs" transform="rotate(86.5318 1129 629)" style="paint-order:stroke;stroke:#fff;stroke-width:3px;stroke-linejoin:round" >شارع البنوك</text>
<text x="1133" y="744.36" font-size="13.5" font-weight="400" fill="#202022" text-anchor="middle" textLength="101.005" lengthAdjust="spacing" transform="rotate(89.4327 1133 739.5)" style="paint-order:stroke;stroke:#fff;stroke-width:3px;stroke-linejoin:round" >Grand Hamad St</text>
<text x="1133" y="744.36" font-size="13.5" font-weight="400" fill="#202022" text-anchor="middle" textLength="101.005" lengthAdjust="spacing" transform="rotate(89.4327 1133 739.5)" stroke="#202022" stroke-width="0.38" >Grand Hamad St</text>
<text x="1176.75" y="699.18" font-size="13" font-weight="400" fill="#202022" text-anchor="middle" textLength="55.6529" lengthAdjust="spacing" transform="rotate(-81.2147 1176.75 694.5)" style="paint-order:stroke;stroke:#fff;stroke-width:3px;stroke-linejoin:round" >Al Madina</text>
<text x="1176.75" y="699.18" font-size="13" font-weight="400" fill="#202022" text-anchor="middle" textLength="55.6529" lengthAdjust="spacing" transform="rotate(-81.2147 1176.75 694.5)" stroke="#202022" stroke-width="0.2" >Al Madina</text>
<text x="1219" y="649.93" font-size="13" font-weight="400" fill="#202022" text-anchor="middle" textLength="67.3071" lengthAdjust="spacing" transform="rotate(-26.9457 1219 645.25)" style="paint-order:stroke;stroke:#fff;stroke-width:3px;stroke-linejoin:round" >Al Mahar St</text>
<text x="1219" y="649.93" font-size="13" font-weight="400" fill="#202022" text-anchor="middle" textLength="67.3071" lengthAdjust="spacing" transform="rotate(-26.9457 1219 645.25)" stroke="#202022" stroke-width="0.2" >Al Mahar St</text>
<text x="1203" y="723.14" font-size="11.5" font-weight="400" fill="#2a2a2a" text-anchor="middle" textLength="30.5287" lengthAdjust="spacingAndGlyphs" transform="rotate(-58.3925 1203 719)" style="paint-order:stroke;stroke:#fff;stroke-width:3px;stroke-linejoin:round" >الارقم</text>
<text x="1291" y="729.46" font-size="13.5" font-weight="400" fill="#202022" text-anchor="middle" textLength="13" lengthAdjust="spacing" transform="rotate(-32 1291 724.6)" style="paint-order:stroke;stroke:#fff;stroke-width:3px;stroke-linejoin:round" >St</text>
<text x="1291" y="729.46" font-size="13.5" font-weight="400" fill="#202022" text-anchor="middle" textLength="13" lengthAdjust="spacing" transform="rotate(-32 1291 724.6)" stroke="#202022" stroke-width="0.3" >St</text>
<text x="714" y="755.86" font-size="13.5" font-weight="400" fill="#202022" text-anchor="middle" textLength="78.1025" lengthAdjust="spacing" transform="rotate(39.8056 714 751)" style="paint-order:stroke;stroke:#fff;stroke-width:3px;stroke-linejoin:round" >Al Asmakh St</text>
<text x="714" y="755.86" font-size="13.5" font-weight="400" fill="#202022" text-anchor="middle" textLength="78.1025" lengthAdjust="spacing" transform="rotate(39.8056 714 751)" stroke="#202022" stroke-width="0.38" >Al Asmakh St</text>
<text x="842" y="749.86" font-size="13.5" font-weight="400" fill="#202022" text-anchor="middle" textLength="90.3549" lengthAdjust="spacing" transform="rotate(84.9204 842 745)" style="paint-order:stroke;stroke:#fff;stroke-width:3px;stroke-linejoin:round" >Al Aziziya St</text>
<text x="842" y="749.86" font-size="13.5" font-weight="400" fill="#202022" text-anchor="middle" textLength="90.3549" lengthAdjust="spacing" transform="rotate(84.9204 842 745)" stroke="#202022" stroke-width="0.38" >Al Aziziya St</text>
<text x="858" y="742.14" font-size="11.5" font-weight="400" fill="#2a2a2a" text-anchor="middle" textLength="29.1204" lengthAdjust="spacingAndGlyphs" transform="rotate(74.0546 858 738)" style="paint-order:stroke;stroke:#fff;stroke-width:3px;stroke-linejoin:round" >البريد</text>
<text x="880" y="755.18" font-size="13" font-weight="400" fill="#202022" text-anchor="middle" textLength="59.5399" lengthAdjust="spacing" transform="rotate(82.2782 880 750.5)" style="paint-order:stroke;stroke:#fff;stroke-width:3px;stroke-linejoin:round" >Masjid St</text>
<text x="880" y="755.18" font-size="13" font-weight="400" fill="#202022" text-anchor="middle" textLength="59.5399" lengthAdjust="spacing" transform="rotate(82.2782 880 750.5)" stroke="#202022" stroke-width="0.38" >Masjid St</text>
<text x="789.75" y="763.68" font-size="13" font-weight="400" fill="#202022" text-anchor="middle" textLength="62.0181" lengthAdjust="spacing" transform="rotate(88.6141 789.75 759)" style="paint-order:stroke;stroke:#fff;stroke-width:3px;stroke-linejoin:round" >Aghadir St</text>
<text x="789.75" y="763.68" font-size="13" font-weight="400" fill="#202022" text-anchor="middle" textLength="62.0181" lengthAdjust="spacing" transform="rotate(88.6141 789.75 759)" stroke="#202022" stroke-width="0.15" >Aghadir St</text>
<text x="807" y="343.5" font-size="12.5" font-weight="400" fill="#202022" text-anchor="middle" textLength="78.4092" lengthAdjust="spacing" transform="rotate(-95.856 807 339)" style="paint-order:stroke;stroke:#fff;stroke-width:3px;stroke-linejoin:round" >Al Corniche St</text>
<text x="807" y="343.5" font-size="12.5" font-weight="400" fill="#202022" text-anchor="middle" textLength="78.4092" lengthAdjust="spacing" transform="rotate(-95.856 807 339)" stroke="#202022" stroke-width="0.15" >Al Corniche St</text>
<text x="636" y="434.64" font-size="14" font-weight="400" fill="#3e4245" text-anchor="end" textLength="101" lengthAdjust="spacing" style="paint-order:stroke;stroke:#fff;stroke-width:3px;stroke-linejoin:round" >Artisanal Bakery</text>
<text x="636" y="446.64" font-size="11.5" font-weight="400" fill="#3e4245" text-anchor="end" textLength="48" lengthAdjust="spacingAndGlyphs" style="paint-order:stroke;stroke:#fff;stroke-width:3px;stroke-linejoin:round" >مخبز رسك</text>
<text x="627.5" y="504.44" font-size="14" font-weight="400" fill="#3e4245" text-anchor="end" textLength="55" lengthAdjust="spacing" style="paint-order:stroke;stroke:#fff;stroke-width:3px;stroke-linejoin:round" >Nourlaya</text>
<text x="627.5" y="516.14" font-size="11.5" font-weight="400" fill="#3e4245" text-anchor="end" textLength="24.5" lengthAdjust="spacingAndGlyphs" style="paint-order:stroke;stroke:#fff;stroke-width:3px;stroke-linejoin:round" >نورلايا</text>
<text x="861" y="427.84" font-size="14" font-weight="400" fill="#3e4245" text-anchor="end" textLength="122.6" lengthAdjust="spacing" style="paint-order:stroke;stroke:#fff;stroke-width:3px;stroke-linejoin:round" >Msheireb Museums</text>
<text x="861" y="439.84" font-size="11.5" font-weight="400" fill="#3e4245" text-anchor="end" textLength="66" lengthAdjust="spacingAndGlyphs" style="paint-order:stroke;stroke:#fff;stroke-width:3px;stroke-linejoin:round" >متاحف مشيرب</text>
<text x="1022" y="385.54" font-size="14" font-weight="400" fill="#3e4245" text-anchor="end" textLength="70.5" lengthAdjust="spacing" style="paint-order:stroke;stroke:#fff;stroke-width:3px;stroke-linejoin:round" >Souq Waqif</text>
<text x="1022" y="397.14" font-size="11.5" font-weight="400" fill="#3e4245" text-anchor="end" textLength="50" lengthAdjust="spacingAndGlyphs" style="paint-order:stroke;stroke:#fff;stroke-width:3px;stroke-linejoin:round" >سوق واقف</text>
<text x="1134.7" y="447.44" font-size="14" font-weight="400" fill="#3e4245" text-anchor="end" textLength="118.7" lengthAdjust="spacing" style="paint-order:stroke;stroke:#fff;stroke-width:3px;stroke-linejoin:round" >Souq Waqif Station</text>
<text x="1134.7" y="461.04" font-size="14" font-weight="400" fill="#3e4245" text-anchor="end" textLength="92" lengthAdjust="spacing" style="paint-order:stroke;stroke:#fff;stroke-width:3px;stroke-linejoin:round" >Metro Goldline</text>
<text x="1134.7" y="473.14" font-size="11.5" font-weight="400" fill="#3e4245" text-anchor="end" textLength="72" lengthAdjust="spacingAndGlyphs" style="paint-order:stroke;stroke:#fff;stroke-width:3px;stroke-linejoin:round" >مترو سوق واقف</text>
<text x="919" y="525.64" font-size="14" font-weight="400" fill="#3e4245" text-anchor="start" textLength="121.8" lengthAdjust="spacing" style="paint-order:stroke;stroke:#fff;stroke-width:3px;stroke-linejoin:round" >Alwadi Hotel Doha -</text>
<text x="919" y="539.34" font-size="14" font-weight="400" fill="#3e4245" text-anchor="start" textLength="121" lengthAdjust="spacing" style="paint-order:stroke;stroke:#fff;stroke-width:3px;stroke-linejoin:round" >MGallery Collection</text>
<text x="949" y="550.44" font-size="11.5" font-weight="400" fill="#3e4245" text-anchor="middle" textLength="50" lengthAdjust="spacingAndGlyphs" style="paint-order:stroke;stroke:#fff;stroke-width:3px;stroke-linejoin:round" >فندق الوادي</text>
<text x="961.7" y="561.64" font-size="11.5" font-weight="400" fill="#3e4245" text-anchor="middle" textLength="83.4" lengthAdjust="spacingAndGlyphs" style="paint-order:stroke;stroke:#fff;stroke-width:3px;stroke-linejoin:round" >الدوحة - إم جاليري</text>
<text x="1223" y="577.54" font-size="14" font-weight="400" fill="#3e4245" text-anchor="end" textLength="101.5" lengthAdjust="spacing" style="paint-order:stroke;stroke:#fff;stroke-width:3px;stroke-linejoin:round" >Central Inn Souq</text>
<text x="1223" y="591.04" font-size="14" font-weight="400" fill="#3e4245" text-anchor="end" textLength="73.3" lengthAdjust="spacing" style="paint-order:stroke;stroke:#fff;stroke-width:3px;stroke-linejoin:round" >Waqif, Doha</text>
<text x="690" y="662.4" font-size="15" font-weight="400" fill="#222" text-anchor="end" textLength="58" lengthAdjust="spacing" style="paint-order:stroke;stroke:#fff;stroke-width:3px;stroke-linejoin:round" >Msheireb</text>
<text x="690" y="662.4" font-size="15" font-weight="400" fill="#222" text-anchor="end" textLength="58" lengthAdjust="spacing" stroke="#222" stroke-width="0.25" >Msheireb</text>
<text x="690" y="674.14" font-size="11.5" font-weight="400" fill="#3e4245" text-anchor="end" textLength="64" lengthAdjust="spacingAndGlyphs" style="paint-order:stroke;stroke:#fff;stroke-width:3px;stroke-linejoin:round" >محطة مشيرب</text>
<path transform="translate(872 393) rotate(5)" d="M-4 0h6M0 -2.200L3 0 0 2.200" fill="none" stroke="#6d809b" stroke-width="1.100"/>
<path transform="translate(924 388) rotate(172)" d="M-4 0h6M0 -2.200L3 0 0 2.200" fill="none" stroke="#6d809b" stroke-width="1.100"/>
<path transform="translate(958 364) rotate(175)" d="M-4 0h6M0 -2.200L3 0 0 2.200" fill="none" stroke="#6d809b" stroke-width="1.100"/>
<path transform="translate(922 430) rotate(-75)" d="M-4 0h6M0 -2.200L3 0 0 2.200" fill="none" stroke="#6d809b" stroke-width="1.100"/>
<path transform="translate(895 470) rotate(-80)" d="M-4 0h6M0 -2.200L3 0 0 2.200" fill="none" stroke="#6d809b" stroke-width="1.100"/>
<path transform="translate(880 520) rotate(-80)" d="M-4 0h6M0 -2.200L3 0 0 2.200" fill="none" stroke="#6d809b" stroke-width="1.100"/>
<path transform="translate(1327 388) rotate(-88)" d="M-4 0h6M0 -2.200L3 0 0 2.200" fill="none" stroke="#6d809b" stroke-width="1.100"/>
<path transform="translate(1254 508) rotate(-12)" d="M-4 0h6M0 -2.200L3 0 0 2.200" fill="none" stroke="#6d809b" stroke-width="1.100"/>
<path transform="translate(1214 517) rotate(-8)" d="M-4 0h6M0 -2.200L3 0 0 2.200" fill="none" stroke="#6d809b" stroke-width="1.100"/>
<path transform="translate(552 500) rotate(-90)" d="M-4 0h6M0 -2.200L3 0 0 2.200" fill="none" stroke="#6d809b" stroke-width="1.100"/>
<path transform="translate(1008 577) rotate(-35)" d="M-4 0h6M0 -2.200L3 0 0 2.200" fill="none" stroke="#6d809b" stroke-width="1.100"/>
<path transform="translate(632 686) rotate(90)" d="M-4 0h6M0 -2.200L3 0 0 2.200" fill="none" stroke="#6d809b" stroke-width="1.100"/>
<path transform="translate(1314 570) rotate(-100)" d="M-4 0h6M0 -2.200L3 0 0 2.200" fill="none" stroke="#6d809b" stroke-width="1.100"/>
<g transform="translate(651 432.6)">
<path d="M-6 6.6 L0 15.3 L6 6.6 Z" fill="#fff" stroke="#c4c6c9" stroke-width=".7"/>
<circle r="10.9" fill="#fff" stroke="#d2d4d7" stroke-width=".6"/>
<path d="M-3.800 7.8 L0 12.3 L3.800 7.8 Z" fill="#f5842a"/>
<circle r="9.6" fill="#f5842a"/>
<g fill="none" stroke="#fff" stroke-width="1.500" stroke-linecap="round"><path d="M-4.200 -5v3.300a1.700 1.700 0 0 0 3.400 0V-5M-2.500 -5v10"/></g><path d="M1.600 -5.200c2.200 0 3 2 3 4.300H3.300V5H1.600z" fill="#fff"/>
</g>
<g transform="translate(642.8 502.3)">
<path d="M-6 6.6 L0 15.3 L6 6.6 Z" fill="#fff" stroke="#c4c6c9" stroke-width=".7"/>
<circle r="10.9" fill="#fff" stroke="#d2d4d7" stroke-width=".6"/>
<path d="M-3.800 7.8 L0 12.3 L3.800 7.8 Z" fill="#f5842a"/>
<circle r="9.6" fill="#f5842a"/>
<g fill="none" stroke="#fff" stroke-width="1.500" stroke-linecap="round"><path d="M-4.200 -5v3.300a1.700 1.700 0 0 0 3.400 0V-5M-2.500 -5v10"/></g><path d="M1.600 -5.200c2.200 0 3 2 3 4.300H3.300V5H1.600z" fill="#fff"/>
</g>
<g transform="translate(708 488)">
<path d="M-6 6.6 L0 15.3 L6 6.6 Z" fill="#fff" stroke="#c4c6c9" stroke-width=".7"/>
<circle r="10.9" fill="#fff" stroke="#d2d4d7" stroke-width=".6"/>
<path d="M-3.800 7.8 L0 12.3 L3.800 7.8 Z" fill="#f545c0"/>
<circle r="9.6" fill="#f545c0"/>
<path d="M-5.200 -4h1.500v4.300h9v-1.700a2 2 0 0 0-2-2H-.6v2.900h-2V-4zM-5.200 .3h10.500v3.700h-1.500v-1.700h-7.500v1.700h-1.500z" fill="#fff"/><circle cx="-2.100" cy="-1.900" r="1.250" fill="#fff"/>
</g>
<g transform="translate(904 535.7)">
<path d="M-6 6.6 L0 15.3 L6 6.6 Z" fill="#fff" stroke="#c4c6c9" stroke-width=".7"/>
<circle r="10.9" fill="#fff" stroke="#d2d4d7" stroke-width=".6"/>
<path d="M-3.800 7.8 L0 12.3 L3.800 7.8 Z" fill="#f545c0"/>
<circle r="9.6" fill="#f545c0"/>
<path d="M-5.200 -4h1.500v4.300h9v-1.700a2 2 0 0 0-2-2H-.6v2.900h-2V-4zM-5.200 .3h10.500v3.700h-1.500v-1.700h-7.500v1.700h-1.500z" fill="#fff"/><circle cx="-2.100" cy="-1.900" r="1.250" fill="#fff"/>
</g>
<g transform="translate(1238.7 577)">
<path d="M-6 6.6 L0 15.3 L6 6.6 Z" fill="#fff" stroke="#c4c6c9" stroke-width=".7"/>
<circle r="10.9" fill="#fff" stroke="#d2d4d7" stroke-width=".6"/>
<path d="M-3.800 7.8 L0 12.3 L3.800 7.8 Z" fill="#f545c0"/>
<circle r="9.6" fill="#f545c0"/>
<path d="M-5.200 -4h1.500v4.300h9v-1.700a2 2 0 0 0-2-2H-.6v2.900h-2V-4zM-5.200 .3h10.500v3.700h-1.500v-1.700h-7.500v1.700h-1.500z" fill="#fff"/><circle cx="-2.100" cy="-1.900" r="1.250" fill="#fff"/>
</g>
<g transform="translate(1034 650.6)">
<path d="M-6 6.6 L0 15.3 L6 6.6 Z" fill="#fff" stroke="#c4c6c9" stroke-width=".7"/>
<circle r="10.9" fill="#fff" stroke="#d2d4d7" stroke-width=".6"/>
<path d="M-3.800 7.8 L0 12.3 L3.800 7.8 Z" fill="#f545c0"/>
<circle r="9.6" fill="#f545c0"/>
<path d="M-5.200 -4h1.500v4.300h9v-1.700a2 2 0 0 0-2-2H-.6v2.900h-2V-4zM-5.200 .3h10.500v3.700h-1.500v-1.700h-7.500v1.700h-1.500z" fill="#fff"/><circle cx="-2.100" cy="-1.900" r="1.250" fill="#fff"/>
</g>
<g transform="translate(876.8 426.3)">
<path d="M-6 6.6 L0 15.3 L6 6.6 Z" fill="#fff" stroke="#c4c6c9" stroke-width=".7"/>
<circle r="10.9" fill="#fff" stroke="#d2d4d7" stroke-width=".6"/>
<path d="M-3.800 7.8 L0 12.3 L3.800 7.8 Z" fill="#b070f0"/>
<circle r="9.6" fill="#b070f0"/>
<path d="M0 -5.600L5.600 -2.500v1h-11.200v-1zM-5.200 3.600h10.400v1.500h-10.400zM-4.500 -.9h1.600v3.900h-1.600zM2.900 -.9h1.600v3.900h-1.600zM-1.900 -.9h.9l1 1.500 1-1.500h.9v3.900h-1v-2.200l-.9 1.300-.9-1.300v2.200h-1z" fill="#fff"/>
</g>
<g transform="translate(1149.8 452.2)">
<path d="M-6 6.6 L0 15.3 L6 6.6 Z" fill="#fff" stroke="#c4c6c9" stroke-width=".7"/>
<circle r="10.9" fill="#fff" stroke="#d2d4d7" stroke-width=".6"/>
<path d="M-3.800 7.8 L0 12.3 L3.800 7.8 Z" fill="#b070f0"/>
<circle r="9.6" fill="#b070f0"/>
<path d="M0 -5.600L5.600 -2.500v1h-11.200v-1zM-5.200 3.600h10.400v1.500h-10.400zM-4.500 -.9h1.600v3.900h-1.600zM2.900 -.9h1.600v3.900h-1.600zM-1.900 -.9h.9l1 1.500 1-1.500h.9v3.900h-1v-2.200l-.9 1.300-.9-1.300v2.200h-1z" fill="#fff"/>
</g>
<g transform="translate(1037 382.5)">
<path d="M-6 6.6 L0 15.3 L6 6.6 Z" fill="#fff" stroke="#c4c6c9" stroke-width=".7"/>
<circle r="10.9" fill="#fff" stroke="#d2d4d7" stroke-width=".6"/>
<path d="M-3.800 7.8 L0 12.3 L3.800 7.8 Z" fill="#1a93f0"/>
<circle r="9.6" fill="#1a93f0"/>
<path d="M-5.800 -4.600h1.900l.5 1.300h8.600l-1.700 4.600h-5.400l-.6 1.100h6.800v1.100h-7.700c-.9 0-1.200-.7-.9-1.300l.9-1.600-2-4.100h-1.400z" fill="#fff"/><circle cx="-2.200" cy="4.800" r="1" fill="#fff"/><circle cx="2.900" cy="4.800" r="1" fill="#fff"/>
</g>
<g transform="translate(936.7 465)"><rect x="-7.300" y="-7.300" width="14.600" height="14.600" rx="4" fill="#fff"/><rect x="-6" y="-6" width="12" height="12" rx="3" fill="#4c657c"/><path d="M-3.400 -3.600a1 1 0 0 1 1-1h4.800a1 1 0 0 1 1 1v5.800h-6.800zM-2.600 2.600h1.300v1.200h-1.300zM1.300 2.600h1.300v1.200h-1.300z" fill="#fff"/><rect x="-2.500" y="-3.500" width="5" height="2.800" fill="#4c657c"/><circle cx="-1.800" cy=".8" r=".6" fill="#4c657c"/><circle cx="1.800" cy=".8" r=".6" fill="#4c657c"/></g>
<g transform="translate(1109.5 380.5)"><rect x="-7.300" y="-7.300" width="14.600" height="14.600" rx="4" fill="#fff"/><rect x="-6" y="-6" width="12" height="12" rx="3" fill="#4c657c"/><path d="M-3.400 -3.600a1 1 0 0 1 1-1h4.800a1 1 0 0 1 1 1v5.800h-6.800zM-2.600 2.600h1.300v1.200h-1.300zM1.300 2.600h1.300v1.200h-1.300z" fill="#fff"/><rect x="-2.500" y="-3.500" width="5" height="2.800" fill="#4c657c"/><circle cx="-1.800" cy=".8" r=".6" fill="#4c657c"/><circle cx="1.800" cy=".8" r=".6" fill="#4c657c"/></g>
<g transform="translate(1236 424.3)"><rect x="-7.300" y="-7.300" width="14.600" height="14.600" rx="4" fill="#fff"/><rect x="-6" y="-6" width="12" height="12" rx="3" fill="#4c657c"/><path d="M-3.400 -3.600a1 1 0 0 1 1-1h4.800a1 1 0 0 1 1 1v5.800h-6.800zM-2.600 2.600h1.300v1.200h-1.300zM1.300 2.600h1.300v1.200h-1.300z" fill="#fff"/><rect x="-2.500" y="-3.500" width="5" height="2.800" fill="#4c657c"/><circle cx="-1.800" cy=".8" r=".6" fill="#4c657c"/><circle cx="1.800" cy=".8" r=".6" fill="#4c657c"/></g>
<g transform="translate(1172.4 547.5)"><rect x="-7.300" y="-7.300" width="14.600" height="14.600" rx="4" fill="#fff"/><rect x="-6" y="-6" width="12" height="12" rx="3" fill="#4c657c"/><path d="M-3.400 -3.600a1 1 0 0 1 1-1h4.800a1 1 0 0 1 1 1v5.800h-6.800zM-2.600 2.600h1.300v1.200h-1.300zM1.300 2.600h1.300v1.200h-1.300z" fill="#fff"/><rect x="-2.500" y="-3.500" width="5" height="2.800" fill="#4c657c"/><circle cx="-1.800" cy=".8" r=".6" fill="#4c657c"/><circle cx="1.800" cy=".8" r=".6" fill="#4c657c"/></g>
<g transform="translate(1194.6 547.5)"><rect x="-7.300" y="-7.300" width="14.600" height="14.600" rx="4" fill="#fff"/><rect x="-6" y="-6" width="12" height="12" rx="3" fill="#4c657c"/><path d="M-3.400 -3.600a1 1 0 0 1 1-1h4.800a1 1 0 0 1 1 1v5.800h-6.800zM-2.600 2.600h1.300v1.200h-1.300zM1.300 2.600h1.300v1.200h-1.300z" fill="#fff"/><rect x="-2.500" y="-3.500" width="5" height="2.800" fill="#4c657c"/><circle cx="-1.800" cy=".8" r=".6" fill="#4c657c"/><circle cx="1.800" cy=".8" r=".6" fill="#4c657c"/></g>
<g transform="translate(608 574)"><rect x="-7.300" y="-7.300" width="14.600" height="14.600" rx="4" fill="#fff"/><rect x="-6" y="-6" width="12" height="12" rx="3" fill="#4c657c"/><path d="M-3.400 -3.600a1 1 0 0 1 1-1h4.800a1 1 0 0 1 1 1v5.800h-6.800zM-2.600 2.600h1.300v1.200h-1.300zM1.300 2.600h1.300v1.200h-1.300z" fill="#fff"/><rect x="-2.500" y="-3.500" width="5" height="2.800" fill="#4c657c"/><circle cx="-1.800" cy=".8" r=".6" fill="#4c657c"/><circle cx="1.800" cy=".8" r=".6" fill="#4c657c"/></g>
<g transform="translate(636 618)"><rect x="-7.300" y="-7.300" width="14.600" height="14.600" rx="4" fill="#fff"/><rect x="-6" y="-6" width="12" height="12" rx="3" fill="#4c657c"/><path d="M-3.400 -3.600a1 1 0 0 1 1-1h4.800a1 1 0 0 1 1 1v5.800h-6.800zM-2.600 2.600h1.300v1.200h-1.300zM1.300 2.600h1.300v1.200h-1.300z" fill="#fff"/><rect x="-2.500" y="-3.500" width="5" height="2.800" fill="#4c657c"/><circle cx="-1.800" cy=".8" r=".6" fill="#4c657c"/><circle cx="1.800" cy=".8" r=".6" fill="#4c657c"/></g>
<g transform="translate(585.5 639)"><rect x="-7.300" y="-7.300" width="14.600" height="14.600" rx="4" fill="#fff"/><rect x="-6" y="-6" width="12" height="12" rx="3" fill="#4c657c"/><path d="M-3.400 -3.600a1 1 0 0 1 1-1h4.800a1 1 0 0 1 1 1v5.800h-6.800zM-2.600 2.600h1.300v1.200h-1.300zM1.300 2.600h1.300v1.200h-1.300z" fill="#fff"/><rect x="-2.500" y="-3.500" width="5" height="2.800" fill="#4c657c"/><circle cx="-1.800" cy=".8" r=".6" fill="#4c657c"/><circle cx="1.800" cy=".8" r=".6" fill="#4c657c"/></g>
<g transform="translate(880.7 572.5)"><rect x="-7.300" y="-7.300" width="14.600" height="14.600" rx="4" fill="#fff"/><rect x="-6" y="-6" width="12" height="12" rx="3" fill="#4c657c"/><path d="M-3.400 -3.600a1 1 0 0 1 1-1h4.800a1 1 0 0 1 1 1v5.800h-6.800zM-2.600 2.600h1.300v1.200h-1.300zM1.300 2.600h1.300v1.200h-1.300z" fill="#fff"/><rect x="-2.500" y="-3.500" width="5" height="2.800" fill="#4c657c"/><circle cx="-1.800" cy=".8" r=".6" fill="#4c657c"/><circle cx="1.800" cy=".8" r=".6" fill="#4c657c"/></g>
<g transform="translate(1006.4 711.4)"><rect x="-7.300" y="-7.300" width="14.600" height="14.600" rx="4" fill="#fff"/><rect x="-6" y="-6" width="12" height="12" rx="3" fill="#4c657c"/><path d="M-3.400 -3.600a1 1 0 0 1 1-1h4.800a1 1 0 0 1 1 1v5.800h-6.800zM-2.600 2.600h1.300v1.200h-1.300zM1.300 2.600h1.300v1.200h-1.300z" fill="#fff"/><rect x="-2.500" y="-3.500" width="5" height="2.800" fill="#4c657c"/><circle cx="-1.800" cy=".8" r=".6" fill="#4c657c"/><circle cx="1.800" cy=".8" r=".6" fill="#4c657c"/></g>
<g transform="translate(1279.4 692.3)"><rect x="-7.300" y="-7.300" width="14.600" height="14.600" rx="4" fill="#fff"/><rect x="-6" y="-6" width="12" height="12" rx="3" fill="#4c657c"/><path d="M-3.400 -3.600a1 1 0 0 1 1-1h4.800a1 1 0 0 1 1 1v5.800h-6.800zM-2.600 2.600h1.300v1.200h-1.300zM1.300 2.600h1.300v1.200h-1.300z" fill="#fff"/><rect x="-2.500" y="-3.500" width="5" height="2.800" fill="#4c657c"/><circle cx="-1.800" cy=".8" r=".6" fill="#4c657c"/><circle cx="1.800" cy=".8" r=".6" fill="#4c657c"/></g>
<g transform="translate(585 743)"><rect x="-7.300" y="-7.300" width="14.600" height="14.600" rx="4" fill="#fff"/><rect x="-6" y="-6" width="12" height="12" rx="3" fill="#4c657c"/><path d="M-3.400 -3.600a1 1 0 0 1 1-1h4.800a1 1 0 0 1 1 1v5.800h-6.800zM-2.600 2.600h1.300v1.200h-1.300zM1.300 2.600h1.300v1.200h-1.300z" fill="#fff"/><rect x="-2.500" y="-3.500" width="5" height="2.800" fill="#4c657c"/><circle cx="-1.800" cy=".8" r=".6" fill="#4c657c"/><circle cx="1.800" cy=".8" r=".6" fill="#4c657c"/></g>
<g transform="translate(726 748)"><rect x="-7.300" y="-7.300" width="14.600" height="14.600" rx="4" fill="#fff"/><rect x="-6" y="-6" width="12" height="12" rx="3" fill="#4c657c"/><path d="M-3.400 -3.600a1 1 0 0 1 1-1h4.800a1 1 0 0 1 1 1v5.800h-6.800zM-2.600 2.600h1.300v1.200h-1.300zM1.300 2.600h1.300v1.200h-1.300z" fill="#fff"/><rect x="-2.500" y="-3.500" width="5" height="2.800" fill="#4c657c"/><circle cx="-1.800" cy=".8" r=".6" fill="#4c657c"/><circle cx="1.800" cy=".8" r=".6" fill="#4c657c"/></g>
<g transform="translate(1154 521)"><circle r="11.300" fill="#fff"/><circle r="9.700" fill="#afc0f8"/><text x="0" y="5" font-size="13.500" font-weight="700" fill="#3a2fe0" text-anchor="middle">P</text></g>
<g transform="translate(702.700 661.900)"><rect x="-9.300" y="-9.300" width="18.600" height="18.600" rx="3.500" fill="#2a1136"/><path d="M-3.600 -3.600h7.200v7.200h-7.200z" fill="none" stroke="#fff" stroke-width="1.500"/><path d="M-1.300 -1.700h2.600v3.600h-2.600z" fill="#fff"/><path d="M-5.200 -3.600v7.200M5.200 -3.600v7.200" stroke="#fff" stroke-width="1"/></g>
<g><rect x="948" y="530" width="3.200" height="23.500" rx="1.200" fill="#c2154f"/><circle cx="949.500" cy="521" r="14.600" fill="#c2154f"/><circle cx="949.500" cy="521" r="4.800" fill="#5d0a26"/><text x="949.500" y="525" font-size="10" font-weight="700" fill="#e6dfe2" text-anchor="middle" textLength="9">ad</text></g>
<rect x="1003" y="730.500" width="353" height="14" fill="#f4f5f7" fill-opacity=".72"/>
<text x="1006.400" y="741" font-size="10.200" fill="#1b1b1b" textLength="86.600" lengthAdjust="spacing">Keyboard shortcuts</text>
<text x="1105" y="741" font-size="10.200" fill="#1b1b1b" textLength="108.300" lengthAdjust="spacing">Map data ©2025 Google</text>
<text x="1226.300" y="741" font-size="10.200" fill="#1b1b1b" textLength="27" lengthAdjust="spacing">Terms</text>
<text x="1266" y="741" font-size="10.200" fill="#1b1b1b" textLength="83" lengthAdjust="spacing">Report a map error</text>
<path d="M1098.500 731v13M1219.500 731v13M1259.500 731v13" stroke="#c9cdd2" stroke-width="1"/>
<g transform="translate(1326 700)"><circle r="20.500" fill="#000" fill-opacity=".10"/><circle r="19.600" fill="#fff"/><g fill="none" stroke="#666" stroke-width="2"><path d="M-3.800 -6.600L0 -10.200 3.800 -6.600M-3.800 6.600L0 10.200 3.800 6.600M-6.600 -3.800L-10.200 0 -6.600 3.800M6.600 -3.800L10.200 0 6.600 3.800"/></g></g>
<text x="554" y="736" font-size="18.500" font-weight="400" fill="#fff" textLength="56" lengthAdjust="spacingAndGlyphs" style="paint-order:stroke;stroke:#6f7378;stroke-width:2.300px;stroke-linejoin:round;letter-spacing:-.5px">Google</text>
</svg>
  </div>
  <!-- map overlays -->
  <div class="abs" style="left:568px;top:340px;width:139px;height:40px;border-radius:20px;background:#fff;box-shadow:0 2px 6px rgba(0,0,0,.28)"></div>
  <svg class="abs" style="left:588px;top:350.500px" width="20" height="20" viewBox="0 0 20 20"><circle cx="10" cy="10" r="6.300" fill="none" stroke="#111" stroke-width="1.700"/><circle cx="10" cy="10" r="3.200" fill="#111"/><path d="M10 .8v3M10 16.200v3M.8 10h3M16.200 10h3" stroke="#111" stroke-width="1.700"/></svg>
  <div class="abs" style="left:567px;top:693px;width:318px;height:27px;border-radius:6px;background:#fdf1df"></div>
  <!--MAPUI-->
<span id="t53" class="tx" style="left:615.7px;top:350.5px;line-height:22px;font-size:16.56px;font-weight:400;color:#111;letter-spacing:-0.770px;-webkit-text-stroke:0.2px #111;">Locate me</span>
<span id="t54" class="tx" style="left:584.0px;top:698.3px;line-height:19px;font-size:13.869px;font-weight:400;color:#222;letter-spacing:-0.464px;">You can drag on this map to select different areas.</span>
  <!-- dropdown -->
  <div class="abs" style="left:544px;top:309px;width:812px;height:48px;border-radius:5px;background:#fff;box-shadow:0 0 0 1px rgba(0,0,0,.09),0 4px 11px rgba(0,0,0,.12)"></div>
  <div class="abs" style="left:887px;top:312px;width:129px;height:47px;border:4px solid #e01b20"></div>
  <!-- selected address -->
  <div class="abs" style="left:544px;top:756px;width:812px;height:64px;border:1px solid #e3e3e3;border-radius:6px"></div>
  <svg class="abs" style="left:558px;top:769px" width="14" height="16" viewBox="0 0 14 16"><path d="M7 .3a6.300 6.300 0 0 0-6.300 6.300c0 4.200 4.700 7.700 6.300 9.100 1.600-1.400 6.300-4.900 6.300-9.100A6.300 6.300 0 0 0 7 .3z" fill="#c4215a"/><circle cx="7" cy="6.400" r="1.700" fill="#fff"/></svg>
  <!-- continue -->
  <div class="abs" style="left:544px;top:836px;width:125px;height:48px;border-radius:4px;background:#18308a"></div>
<span id="t50" class="tx" style="left:542.7px;top:199.1px;line-height:25px;font-size:18.63px;font-weight:700;color:#0a0a0a;letter-spacing:-0.230px;">Choose address</span>
<span id="t51" class="tx" style="left:585.2px;top:266.2px;line-height:22px;font-size:16.56px;font-weight:400;color:#4a4a4a;letter-spacing:0.077px;">Qatar Amiri Guard Recruitment, 8972+H7, Ar-Rayyan, Qatar</span>
<span id="t52" class="tx" style="left:907.9px;top:322.9px;line-height:22px;font-size:16.56px;font-weight:400;color:#999;letter-spacing:0.293px;">No options</span>
<span id="t55" class="tx" style="left:580.5px;top:767.3px;line-height:22px;font-size:16.56px;font-weight:700;color:#0a0a0a;letter-spacing:-0.047px;">Qatar</span>
<span id="t56" class="tx" style="left:580.5px;top:788.5px;line-height:18px;font-size:13.455px;font-weight:400;color:#222;letter-spacing:0.071px;">Zone 04, Doha, Qatar</span>
<span id="t57" class="tx" style="left:569.9px;top:849.7px;line-height:22px;font-size:16.56px;font-weight:700;color:#fff;letter-spacing:-0.070px;">Continue</span>
</div></div>
</body>
</html>
